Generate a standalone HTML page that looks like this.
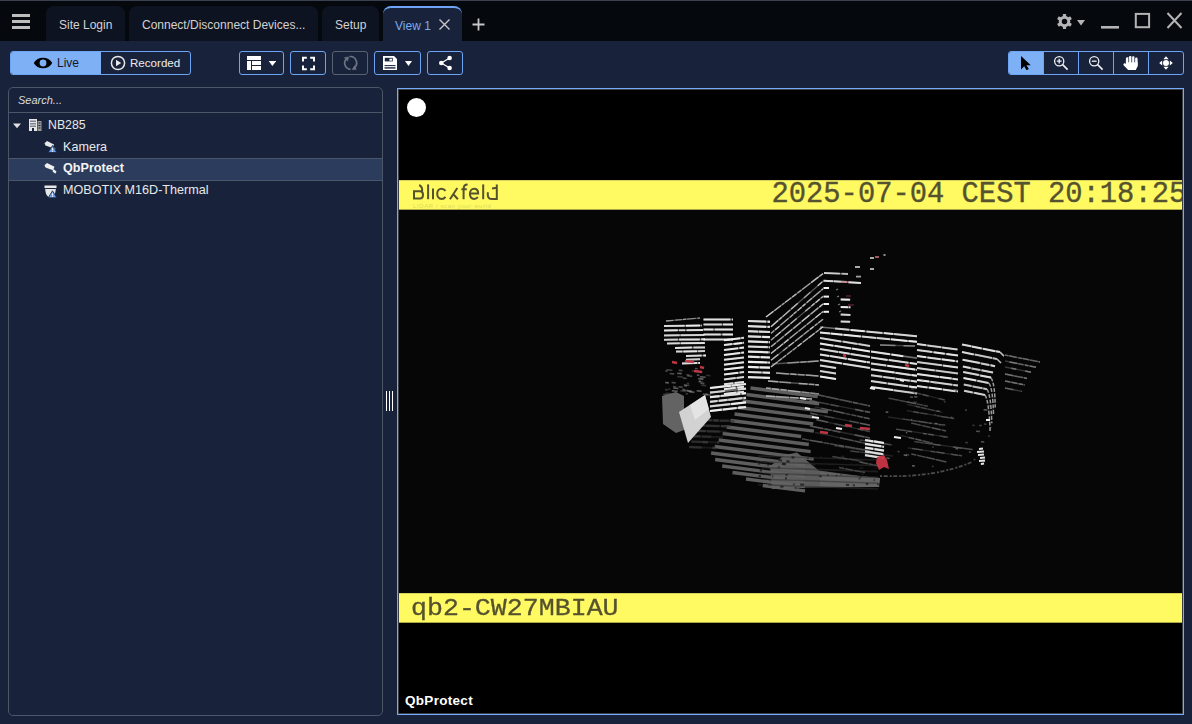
<!DOCTYPE html>
<html><head><meta charset="utf-8">
<style>
*{box-sizing:border-box;margin:0;padding:0}
html,body{width:1192px;height:724px;overflow:hidden;background:#18233b;font-family:"Liberation Sans",sans-serif;}
.abs{position:absolute}
#titlebar{left:0;top:0;width:1192px;height:41px;background:#05080d;border-top:1px solid #3b4150}
.tab{position:absolute;top:6px;height:35px;background:#0e1321;border-radius:8px 8px 0 0;color:#d2d2d2;font-size:12px;line-height:35px;white-space:nowrap}
.tab span{position:absolute;top:2px}
.btn{position:absolute;top:51px;height:24px;border:1px solid #6ea4f4;border-radius:3px;background:#18233b}
.lbl{position:absolute;white-space:nowrap;color:#e6e6e6;font-size:12.5px}
</style></head><body>
<div id="titlebar" class="abs"></div>
<!-- hamburger -->
<div class="abs" style="left:12px;top:14px;width:18px;height:3px;background:#bdbdbd"></div>
<div class="abs" style="left:12px;top:20px;width:18px;height:3px;background:#bdbdbd"></div>
<div class="abs" style="left:12px;top:26px;width:18px;height:3px;background:#bdbdbd"></div>
<!-- tabs -->
<div class="tab" style="left:46px;width:79px"><span style="left:13px">Site Login</span></div>
<div class="tab" style="left:129px;width:189px"><span style="left:13px">Connect/Disconnect Devices...</span></div>
<div class="tab" style="left:322px;width:57px"><span style="left:13px">Setup</span></div>
<div class="tab" style="left:383px;width:79px;background:#18233b;border-top:2px solid #6ea3f5;color:#7aaaf2;line-height:33px"><span style="left:12px">View 1</span></div>
<!-- close x on view tab -->
<svg class="abs" style="left:438px;top:18px" width="13" height="13" viewBox="0 0 13 13"><path d="M1.5 1.5L11.5 11.5M11.5 1.5L1.5 11.5" stroke="#c8c8c8" stroke-width="1.4"/></svg>
<!-- plus -->
<svg class="abs" style="left:472px;top:17.5px" width="13" height="13" viewBox="0 0 13 13"><path d="M6.5 0.5V12.5M0.5 6.5H12.5" stroke="#c8c8c8" stroke-width="1.8"/></svg>
<!-- title right icons -->
<svg class="abs" style="left:1050px;top:8px" width="142" height="30" viewBox="0 0 142 30">
  <g transform="translate(14.5 13.5)" fill="#b4b4b4"><rect x="-1.6" y="-7.6" width="3.2" height="4" rx="0.6" transform="rotate(0)"/><rect x="-1.6" y="-7.6" width="3.2" height="4" rx="0.6" transform="rotate(60)"/><rect x="-1.6" y="-7.6" width="3.2" height="4" rx="0.6" transform="rotate(120)"/><rect x="-1.6" y="-7.6" width="3.2" height="4" rx="0.6" transform="rotate(180)"/><rect x="-1.6" y="-7.6" width="3.2" height="4" rx="0.6" transform="rotate(240)"/><rect x="-1.6" y="-7.6" width="3.2" height="4" rx="0.6" transform="rotate(300)"/><circle r="5.8"/><circle r="2.7" fill="#05080d"/></g>
  <path d="M27 12H35L31 17.5Z" fill="#b4b4b4"/>
  <rect x="51" y="18" width="18" height="2.6" fill="#b4b4b4"/>
  <rect x="85.8" y="5.9" width="13.3" height="13.3" fill="none" stroke="#b4b4b4" stroke-width="2"/>
  <path d="M117.5 5L131.5 20M131.5 5L117.5 20" stroke="#b4b4b4" stroke-width="2"/>
</svg>

<!-- Live / Recorded -->
<div class="btn" style="left:10px;width:181px"></div>
<div class="abs" style="left:11px;top:52px;width:90px;height:22px;background:#7eb0f5;border-radius:2px 0 0 2px"></div>

<!-- toolbar buttons -->
<div class="btn" style="left:239px;width:45px"></div>
<div class="btn" style="left:290px;width:36px"></div>
<div class="btn" style="left:332px;width:36px;border-color:#5a6170"></div>
<div class="btn" style="left:374px;width:47px"></div>
<div class="btn" style="left:427px;width:36px"></div>

<!-- right group -->
<div class="btn" style="left:1008px;width:176px"></div>
<div class="abs" style="left:1009px;top:52px;width:35px;height:22px;background:#7eb0f5;border-radius:2px 0 0 2px"></div>
<div class="abs" style="left:1078px;top:52px;width:1px;height:22px;background:#6ea4f4"></div>
<div class="abs" style="left:1113px;top:52px;width:1px;height:22px;background:#6ea4f4"></div>
<div class="abs" style="left:1148px;top:52px;width:1px;height:22px;background:#6ea4f4"></div>
<div class="abs" style="left:1043px;top:52px;width:1px;height:22px;background:#6ea4f4"></div>

<!-- left panel -->
<div class="abs" style="left:8px;top:87px;width:375px;height:629px;border:1px solid #4b5668;border-radius:5px"></div>
<div class="abs" style="left:9px;top:112px;width:373px;height:1px;background:#4b5668"></div>
<div class="abs" style="left:9px;top:158px;width:373px;height:23px;background:#2b3c5c;border-top:1px solid #4b5668;border-bottom:1px solid #4b5668"></div>


<!-- Live/Recorded content -->
<svg class="abs" style="left:33px;top:57px" width="20" height="12" viewBox="0 0 20 12" overflow="visible"><path d="M0.8 6C4.2 -1 15.8 -1 19.2 6C15.8 13 4.2 13 0.8 6Z" fill="#000"/><circle cx="10" cy="6" r="3.4" fill="#7eb0f5"/></svg>
<div class="lbl" style="left:57px;top:56px;font-size:12px;color:#151525">Live</div>
<svg class="abs" style="left:110px;top:55px" width="16" height="16" viewBox="0 0 16 16"><circle cx="8" cy="8" r="6.6" fill="none" stroke="#e8e8e8" stroke-width="1.5"/><path d="M6 4.8L11.2 8L6 11.2Z" fill="#e8e8e8"/></svg>
<div class="lbl" style="left:130px;top:56px;font-size:11.6px;color:#ececec">Recorded</div>

<!-- layout icon -->
<svg class="abs" style="left:246px;top:55px" width="30" height="16" viewBox="0 0 30 16">
 <rect x="1" y="1" width="14" height="4" fill="#fff"/>
 <rect x="1" y="6" width="4" height="9" fill="#fff"/>
 <rect x="6" y="6" width="9" height="4" fill="#fff"/>
 <rect x="6" y="11" width="9" height="4" fill="#fff"/>
 <path d="M22.7 6H30.1L26.4 11Z" fill="#fff"/>
</svg>
<!-- fullscreen icon -->
<svg class="abs" style="left:300px;top:55px" width="16" height="16" viewBox="0 0 16 16" fill="none" stroke="#fff" stroke-width="2"><path d="M3 6.5V2.8H6.8M10.2 2.8H14V6.5M14 10.5V14.2H10.2M6.8 14.2H3V10.5"/></svg>
<!-- refresh icon -->
<svg class="abs" style="left:342px;top:55px" width="16" height="16" viewBox="0 0 16 16" fill="none" stroke="#6c7280" stroke-width="1.7">
 <path d="M4.6 3.6A6.3 6.3 0 0 0 8.6 14.4"/><path d="M7.4 1.6A6.3 6.3 0 0 1 11.6 13.2"/>
 <path d="M2.4 2.6L6.6 2L5.6 6.2Z" fill="#6c7280" stroke-width="0.6"/><path d="M10.2 14.6L14.2 14.4L12.8 10.6Z" fill="#6c7280" stroke-width="0.6"/>
</svg>
<!-- save icon -->
<svg class="abs" style="left:382px;top:55px" width="32" height="16" viewBox="0 0 32 16">
 <path d="M1 1H12L15 4V15H1Z" fill="#fff"/>
 <rect x="2.8" y="2.8" width="8" height="3.6" fill="#18233b"/>
 <rect x="7.4" y="3.7" width="2.7" height="2" fill="#fff"/>
 <rect x="2.5" y="10.1" width="11" height="1" fill="#18233b"/>
 <rect x="2.5" y="12.1" width="11" height="1.6" fill="#3a4256"/>
 <path d="M23 6H30L26.5 11Z" fill="#fff"/>
</svg>
<!-- share icon -->
<svg class="abs" style="left:437px;top:55px" width="16" height="16" viewBox="0 0 16 16">
 <path d="M4.3 8L12.6 3M4.3 8L12.6 13" stroke="#fff" stroke-width="1.3"/>
 <circle cx="4.3" cy="8" r="2.3" fill="#fff"/><circle cx="12.6" cy="3" r="2.3" fill="#fff"/><circle cx="12.6" cy="13" r="2.3" fill="#fff"/>
</svg>

<!-- right group icons -->
<svg class="abs" style="left:1018px;top:55px" width="16" height="16" viewBox="0 0 16 16"><path d="M3 1V14.5L6.2 11.3L8.6 15.3L10.8 14L8.5 10.2H12.8Z" fill="#000"/></svg>
<svg class="abs" style="left:1052px;top:54px" width="18" height="18" viewBox="0 0 18 18" fill="none" stroke="#f0f0f0" stroke-width="1.3">
 <circle cx="7.2" cy="7.2" r="4.6"/><path d="M10.4 10.4L15.6 15.6" stroke-width="1.6"/><path d="M7.2 4.8V9.6M4.8 7.2H9.6"/>
</svg>
<svg class="abs" style="left:1087px;top:54px" width="18" height="18" viewBox="0 0 18 18" fill="none" stroke="#f0f0f0" stroke-width="1.3">
 <circle cx="7.2" cy="7.2" r="4.6"/><path d="M10.4 10.4L15.6 15.6" stroke-width="1.6"/><path d="M4.8 7.2H9.6"/>
</svg>
<svg class="abs" style="left:1122px;top:55px" width="18" height="16" viewBox="0 0 18 16" fill="#fff">
 <rect x="3.9" y="2.3" width="2.7" height="9" rx="1.35"/><rect x="6.9" y="1" width="2.7" height="9" rx="1.35"/><rect x="9.9" y="1.3" width="2.7" height="9" rx="1.35"/><rect x="12.9" y="2.6" width="2.7" height="9" rx="1.35"/>
 <path d="M3.9 7H15.6V11.2L13.8 15H6.2L1.8 10.5C1.2 9.8 1.3 8.5 2.2 8.2C2.9 8 3.5 8.4 3.9 9Z"/>
 <path d="M6.75 3V7.5M9.75 2V7.5M12.75 2.5V7.5" stroke="#18233b" stroke-width="0.5"/>
</svg>
<svg class="abs" style="left:1158px;top:55px" width="16" height="16" viewBox="0 0 16 16" fill="#fff"><circle cx="8" cy="8" r="3"/><path d="M8 1.2L10.6 4.2H5.4Z M8 14.8L10.6 11.8H5.4Z M1.2 8L4.2 5.4V10.6Z M14.8 8L11.8 5.4V10.6Z"/></svg>

<!-- tree -->
<div class="lbl" style="left:18px;top:94px;font-size:11px;font-style:italic;color:#dcdcdc">Search...</div>
<svg class="abs" style="left:12px;top:122px" width="10" height="8" viewBox="0 0 10 8"><path d="M1 1.5H9L5 6.3Z" fill="#e0e0e0"/></svg>
<svg class="abs" style="left:28px;top:118px" width="15" height="14" viewBox="0 0 15 14" fill="#e6e6e6">
 <path d="M1 1H9V13H6V10H4V13H1Z"/><rect x="9.5" y="3" width="4" height="10" fill="#9a9a9a"/>
 <g fill="#18233b"><rect x="2.5" y="2.5" width="1" height="1.5"/><rect x="4.5" y="2.5" width="1" height="1.5"/><rect x="6.5" y="2.5" width="1" height="1.5"/>
 <rect x="2.5" y="5" width="1" height="1.5"/><rect x="4.5" y="5" width="1" height="1.5"/><rect x="6.5" y="5" width="1" height="1.5"/>
 <rect x="2.5" y="7.5" width="1" height="1.5"/><rect x="4.5" y="7.5" width="1" height="1.5"/><rect x="6.5" y="7.5" width="1" height="1.5"/>
 <rect x="10.5" y="4.5" width="2" height="1"/><rect x="10.5" y="7" width="2" height="1"/><rect x="10.5" y="9.5" width="2" height="1"/></g>
</svg>
<div class="lbl" style="left:48px;top:118px;font-size:12.3px;color:#e8e8e8">NB285</div>
<svg class="abs" style="left:43px;top:140px" width="15" height="13" viewBox="0 0 15 13">
 <path d="M1.5 3.2L4 1L11 4.5L9.5 8L2.5 5.5Z" fill="#e8e8e8"/><path d="M9.8 6.2L12.5 8.8L11.5 10.5" fill="#e8e8e8"/>
 <path d="M9.5 5.5L13.8 12.5H5.2Z" fill="#6aa2f2" stroke="#18233b" stroke-width="0.8"/><rect x="9.1" y="8" width="0.9" height="2.3" fill="#fff"/><rect x="9.1" y="10.9" width="0.9" height="0.9" fill="#fff"/>
</svg>
<div class="lbl" style="left:63px;top:140px;font-size:12.6px;color:#e8e8e8">Kamera</div>
<svg class="abs" style="left:43px;top:162px" width="15" height="13" viewBox="0 0 15 13">
 <path d="M1.5 3.2L4 1L11.5 4.8L10 8.3L2.5 5.5Z" fill="#f0f0f0"/><path d="M10.5 7L13.5 9.5L12.3 11.8L9.5 9.5Z" fill="#f0f0f0"/>
</svg>
<div class="lbl" style="left:63px;top:161px;font-size:12.6px;font-weight:bold;color:#f4f4f4">QbProtect</div>
<svg class="abs" style="left:43px;top:184px" width="15" height="15" viewBox="0 0 15 15">
 <path d="M1.5 1.5H13.5V4H12.8C12.8 10 10.5 13.5 7.5 13.5C4.5 13.5 2.2 10 2.2 4H1.5Z" fill="#e6e6e6"/><rect x="2.2" y="4" width="10.6" height="1" fill="#18233b"/>
 <path d="M9.5 6.8L13.8 13.8H5.2Z" fill="#6aa2f2" stroke="#18233b" stroke-width="0.8"/><rect x="9.1" y="9.3" width="0.9" height="2.3" fill="#fff"/><rect x="9.1" y="12.1" width="0.9" height="0.9" fill="#fff"/>
</svg>
<div class="lbl" style="left:63px;top:183px;font-size:12.6px;color:#e8e8e8">MOBOTIX M16D-Thermal</div>

<!-- splitter grip -->
<div class="abs" style="left:386px;top:391px;width:1px;height:20px;background:#fff"></div>
<div class="abs" style="left:389px;top:391px;width:1px;height:20px;background:#fff"></div>
<div class="abs" style="left:392px;top:391px;width:1px;height:20px;background:#fff"></div>

<!-- video -->
<div class="abs" style="left:397px;top:88px;width:787px;height:627px;border:1px solid #76aafc;background:#3a3f46"></div>


<!-- video content -->
<div class="abs" style="left:399px;top:90px;width:783px;height:623px;overflow:hidden;background:#000">
 <div class="abs" style="left:0;top:120px;width:783px;height:383px;background:#060606"></div>
 <!--CLOUD--><svg class="abs" style="left:0;top:0" width="783" height="623" viewBox="0 0 783 623" fill="none"><defs><filter id="bl" x="-5%" y="-5%" width="110%" height="110%"><feGaussianBlur stdDeviation="0.65"/></filter></defs><g filter="url(#bl)"><path d="M371.0,376.0 L386.0,365.0 L398.0,362.6 L419.8,380.5 L461.0,386.0 L481.0,388.0 L480.0,397.0 L405.0,397.5 L373.0,399.0Z" fill="#5c5c5c" fill-opacity="1.0"/><path d="M421.0,382.0 L461.0,386.0 L481.0,388.0 L480.0,397.0 L421.0,397.0Z" fill="#686868" fill-opacity="0.8"/><path d="M351.5,298.0L418.7,306.6" stroke="#636363" stroke-width="3.3" stroke-opacity="0.95"/><path d="M347.5,304.5L420.2,313.8" stroke="#636363" stroke-width="3.3" stroke-opacity="0.95"/><path d="M343.6,311.0L428.9,321.9" stroke="#636363" stroke-width="3.3" stroke-opacity="0.95"/><path d="M339.6,317.5L414.5,327.1" stroke="#636363" stroke-width="3.3" stroke-opacity="0.95"/><path d="M335.6,324.0L414.2,334.0" stroke="#636363" stroke-width="3.3" stroke-opacity="0.95"/><path d="M331.6,330.5L414.9,341.1" stroke="#636363" stroke-width="3.3" stroke-opacity="0.95"/><path d="M327.7,337.0L402.2,346.5" stroke="#636363" stroke-width="3.3" stroke-opacity="0.95"/><path d="M323.7,343.5L409.8,354.5" stroke="#636363" stroke-width="3.3" stroke-opacity="0.95"/><path d="M319.7,350.0L411.6,361.7" stroke="#636363" stroke-width="3.3" stroke-opacity="0.95"/><path d="M315.7,356.5L414.7,369.1" stroke="#636363" stroke-width="3.3" stroke-opacity="0.95"/><path d="M312.1,363.0L406.0,375.0" stroke="#636363" stroke-width="3.3" stroke-opacity="0.95"/><path d="M316.1,369.5L406.0,381.0" stroke="#636363" stroke-width="3.3" stroke-opacity="0.95"/><path d="M323.2,376.0L406.0,386.6" stroke="#636363" stroke-width="3.3" stroke-opacity="0.95"/><path d="M333.5,382.5L406.0,391.7" stroke="#636363" stroke-width="3.3" stroke-opacity="0.95"/><path d="M347.0,389.0L406.0,396.5" stroke="#636363" stroke-width="3.3" stroke-opacity="0.95"/><path d="M363.7,395.5L406.0,400.9" stroke="#636363" stroke-width="3.3" stroke-opacity="0.95"/><path d="M359.0,366.0L479.0,370.0" stroke="#303030" stroke-width="1.6" stroke-opacity="0.55"/><path d="M361.0,371.8L479.0,375.8" stroke="#303030" stroke-width="1.6" stroke-opacity="0.55"/><path d="M363.0,377.6L479.0,381.6" stroke="#303030" stroke-width="1.6" stroke-opacity="0.55"/><path d="M365.0,383.4L479.0,387.4" stroke="#303030" stroke-width="1.6" stroke-opacity="0.55"/><path d="M367.0,389.2L479.0,393.2" stroke="#303030" stroke-width="1.6" stroke-opacity="0.55"/><path d="M369.0,395.0L479.0,399.0" stroke="#303030" stroke-width="1.6" stroke-opacity="0.55"/><path d="M368.5,375.0L369.8,375.1" stroke="#1c1c1c" stroke-width="2.0" stroke-opacity="0.82"/><path d="M441.6,366.4L445.5,366.8" stroke="#1c1c1c" stroke-width="2.0" stroke-opacity="0.89"/><path d="M436.8,385.3L438.3,385.5" stroke="#1c1c1c" stroke-width="2.0" stroke-opacity="0.51"/><path d="M421.5,367.0L423.0,367.1" stroke="#1c1c1c" stroke-width="2.0" stroke-opacity="0.60"/><path d="M360.7,380.3L363.0,380.5" stroke="#1c1c1c" stroke-width="2.0" stroke-opacity="0.84"/><path d="M420.3,386.1L422.8,386.4" stroke="#1c1c1c" stroke-width="2.0" stroke-opacity="0.76"/><path d="M412.8,374.2L416.8,374.6" stroke="#1c1c1c" stroke-width="2.0" stroke-opacity="0.90"/><path d="M459.5,388.4L461.5,388.6" stroke="#1c1c1c" stroke-width="2.0" stroke-opacity="0.59"/><path d="M392.3,367.3L395.6,367.6" stroke="#1c1c1c" stroke-width="2.0" stroke-opacity="0.66"/><path d="M460.3,377.8L464.2,378.1" stroke="#1c1c1c" stroke-width="2.0" stroke-opacity="0.84"/><path d="M357.1,371.9L360.8,372.3" stroke="#1c1c1c" stroke-width="2.0" stroke-opacity="0.69"/><path d="M476.6,378.1L477.8,378.2" stroke="#1c1c1c" stroke-width="2.0" stroke-opacity="0.75"/><path d="M452.0,373.9L453.2,374.0" stroke="#1c1c1c" stroke-width="2.0" stroke-opacity="0.63"/><path d="M474.6,390.0L476.0,390.2" stroke="#1c1c1c" stroke-width="2.0" stroke-opacity="0.60"/><path d="M369.3,367.0L372.7,367.3" stroke="#1c1c1c" stroke-width="2.0" stroke-opacity="0.57"/><path d="M425.2,379.8L426.8,379.9" stroke="#1c1c1c" stroke-width="2.0" stroke-opacity="0.79"/><path d="M373.0,386.2L374.3,386.4" stroke="#1c1c1c" stroke-width="2.0" stroke-opacity="0.67"/><path d="M383.0,373.9L386.9,374.3" stroke="#1c1c1c" stroke-width="2.0" stroke-opacity="0.82"/><path d="M394.1,394.2L395.7,394.4" stroke="#1c1c1c" stroke-width="2.0" stroke-opacity="0.66"/><path d="M461.2,386.2L462.5,386.3" stroke="#1c1c1c" stroke-width="2.0" stroke-opacity="0.90"/><path d="M383.0,373.5L386.3,373.9" stroke="#1c1c1c" stroke-width="2.0" stroke-opacity="0.63"/><path d="M393.2,367.4L394.4,367.5" stroke="#1c1c1c" stroke-width="2.0" stroke-opacity="0.73"/><path d="M386.6,384.8L388.8,385.1" stroke="#1c1c1c" stroke-width="2.0" stroke-opacity="0.68"/><path d="M474.0,381.0L476.7,381.2" stroke="#1c1c1c" stroke-width="2.0" stroke-opacity="0.85"/><path d="M379.3,370.1L383.0,370.5" stroke="#1c1c1c" stroke-width="2.0" stroke-opacity="0.83"/><path d="M387.4,371.3L390.7,371.6" stroke="#1c1c1c" stroke-width="2.0" stroke-opacity="0.88"/><path d="M381.0,396.4L384.6,396.7" stroke="#1c1c1c" stroke-width="2.0" stroke-opacity="0.74"/><path d="M408.4,368.4L409.5,368.5" stroke="#1c1c1c" stroke-width="2.0" stroke-opacity="0.89"/><path d="M386.1,388.3L387.9,388.4" stroke="#1c1c1c" stroke-width="2.0" stroke-opacity="0.83"/><path d="M429.8,374.7L431.3,374.8" stroke="#1c1c1c" stroke-width="2.0" stroke-opacity="0.79"/><path d="M365.4,372.5L368.1,372.8" stroke="#1c1c1c" stroke-width="2.0" stroke-opacity="0.84"/><path d="M431.9,374.2L435.7,374.6" stroke="#1c1c1c" stroke-width="2.0" stroke-opacity="0.58"/><path d="M359.0,373.9L361.4,374.1" stroke="#1c1c1c" stroke-width="2.0" stroke-opacity="0.52"/><path d="M378.5,377.2L381.2,377.4" stroke="#1c1c1c" stroke-width="2.0" stroke-opacity="0.55"/><path d="M401.2,394.4L405.1,394.8" stroke="#1c1c1c" stroke-width="2.0" stroke-opacity="0.76"/><path d="M441.3,384.3L442.8,384.4" stroke="#1c1c1c" stroke-width="2.0" stroke-opacity="0.51"/><path d="M359.2,395.0L362.3,395.3" stroke="#1c1c1c" stroke-width="2.0" stroke-opacity="0.89"/><path d="M359.6,386.0L362.0,386.2" stroke="#1c1c1c" stroke-width="2.0" stroke-opacity="0.79"/><path d="M395.9,398.0L397.1,398.1" stroke="#1c1c1c" stroke-width="2.0" stroke-opacity="0.72"/><path d="M446.9,394.7L450.1,395.0" stroke="#1c1c1c" stroke-width="2.0" stroke-opacity="0.78"/><path d="M453.8,395.2L455.8,395.4" stroke="#1c1c1c" stroke-width="2.0" stroke-opacity="0.77"/><path d="M466.9,393.7L469.2,394.0" stroke="#1c1c1c" stroke-width="2.0" stroke-opacity="0.82"/><path d="M462.3,383.9L465.2,384.2" stroke="#1c1c1c" stroke-width="2.0" stroke-opacity="0.65"/><path d="M428.1,385.1L429.3,385.2" stroke="#1c1c1c" stroke-width="2.0" stroke-opacity="0.76"/><path d="M478.2,394.0L481.4,394.4" stroke="#1c1c1c" stroke-width="2.0" stroke-opacity="0.66"/><path d="M263.0,306.0 L277.0,302.0 L285.0,306.0 L285.0,340.0 L277.0,343.0 L264.0,334.0Z" fill="#646464" fill-opacity="1.0"/><path d="M301.0,330.0L335.4,331.0" stroke="#3e3e3e" stroke-width="2.04" stroke-opacity="0.36"/><path d="M301.0,330.0L312.8,330.3" stroke="#3e3e3e" stroke-width="2.4" stroke-opacity="0.66"/><path d="M314.2,330.4L319.5,330.5" stroke="#3e3e3e" stroke-width="2.4" stroke-opacity="0.79"/><path d="M320.7,330.6L330.0,330.8" stroke="#3e3e3e" stroke-width="2.4" stroke-opacity="0.58"/><path d="M331.1,330.9L335.4,331.0" stroke="#3e3e3e" stroke-width="2.4" stroke-opacity="0.72"/><path d="M298.8,335.4L331.6,336.4" stroke="#3e3e3e" stroke-width="2.04" stroke-opacity="0.36"/><path d="M298.8,335.4L306.3,335.6" stroke="#3e3e3e" stroke-width="2.4" stroke-opacity="0.74"/><path d="M307.1,335.7L320.5,336.1" stroke="#3e3e3e" stroke-width="2.4" stroke-opacity="0.66"/><path d="M322.0,336.1L329.8,336.3" stroke="#3e3e3e" stroke-width="2.4" stroke-opacity="0.74"/><path d="M330.8,336.4L331.6,336.4" stroke="#3e3e3e" stroke-width="2.4" stroke-opacity="0.52"/><path d="M296.7,340.8L327.8,341.8" stroke="#3e3e3e" stroke-width="2.04" stroke-opacity="0.36"/><path d="M296.7,340.8L306.9,341.1" stroke="#3e3e3e" stroke-width="2.4" stroke-opacity="0.76"/><path d="M308.0,341.2L320.8,341.6" stroke="#3e3e3e" stroke-width="2.4" stroke-opacity="0.57"/><path d="M294.5,346.2L324.1,347.2" stroke="#3e3e3e" stroke-width="2.04" stroke-opacity="0.36"/><path d="M294.5,346.2L301.7,346.4" stroke="#3e3e3e" stroke-width="2.4" stroke-opacity="0.67"/><path d="M303.0,346.5L312.3,346.8" stroke="#3e3e3e" stroke-width="2.4" stroke-opacity="0.53"/><path d="M292.4,351.6L320.3,352.6" stroke="#3e3e3e" stroke-width="2.04" stroke-opacity="0.36"/><path d="M292.4,351.6L302.5,352.0" stroke="#3e3e3e" stroke-width="2.4" stroke-opacity="0.55"/><path d="M303.1,352.0L309.0,352.2" stroke="#3e3e3e" stroke-width="2.4" stroke-opacity="0.79"/><path d="M317.9,352.5L320.3,352.6" stroke="#3e3e3e" stroke-width="2.4" stroke-opacity="0.60"/><path d="M290.2,357.0L316.5,358.0" stroke="#3e3e3e" stroke-width="2.04" stroke-opacity="0.36"/><path d="M290.2,357.0L302.7,357.5" stroke="#3e3e3e" stroke-width="2.4" stroke-opacity="0.58"/><path d="M313.3,357.9L316.5,358.0" stroke="#3e3e3e" stroke-width="2.4" stroke-opacity="0.74"/><path d="M280.0,322.0 L306.0,305.0 L312.0,327.0 L289.0,353.0Z" fill="#d2d2d2" fill-opacity="1.0"/><path d="M291.0,315.0 L306.0,305.0 L310.0,319.0 L296.0,330.0Z" fill="#e8e8e8" fill-opacity="0.8"/><path d="M279.6,296.8L283.7,297.2" stroke="#8a8a8a" stroke-width="1.6" stroke-opacity="0.53"/><path d="M299.3,288.6L304.5,289.1" stroke="#8a8a8a" stroke-width="1.6" stroke-opacity="0.66"/><path d="M267.2,303.2L272.1,303.7" stroke="#8a8a8a" stroke-width="1.6" stroke-opacity="0.31"/><path d="M284.8,294.9L290.4,295.5" stroke="#8a8a8a" stroke-width="1.6" stroke-opacity="0.42"/><path d="M290.3,301.7L295.5,302.3" stroke="#8a8a8a" stroke-width="1.6" stroke-opacity="0.67"/><path d="M285.3,295.6L288.1,295.9" stroke="#8a8a8a" stroke-width="1.6" stroke-opacity="0.57"/><path d="M302.3,295.3L307.2,295.8" stroke="#8a8a8a" stroke-width="1.6" stroke-opacity="0.35"/><path d="M306.2,304.5L312.1,305.1" stroke="#8a8a8a" stroke-width="1.6" stroke-opacity="0.49"/><path d="M301.0,286.7L306.6,287.2" stroke="#8a8a8a" stroke-width="1.6" stroke-opacity="0.64"/><path d="M279.7,280.2L283.5,280.6" stroke="#8a8a8a" stroke-width="1.6" stroke-opacity="0.50"/><path d="M299.9,291.2L302.0,291.4" stroke="#8a8a8a" stroke-width="1.6" stroke-opacity="0.61"/><path d="M266.1,299.6L268.8,299.9" stroke="#8a8a8a" stroke-width="1.6" stroke-opacity="0.40"/><path d="M300.8,281.8L303.4,282.1" stroke="#8a8a8a" stroke-width="1.6" stroke-opacity="0.48"/><path d="M297.7,300.7L302.5,301.2" stroke="#8a8a8a" stroke-width="1.6" stroke-opacity="0.68"/><path d="M286.6,303.6L289.0,303.9" stroke="#8a8a8a" stroke-width="1.6" stroke-opacity="0.35"/><path d="M288.3,285.8L293.2,286.3" stroke="#8a8a8a" stroke-width="1.6" stroke-opacity="0.54"/><path d="M288.1,300.8L292.3,301.2" stroke="#8a8a8a" stroke-width="1.6" stroke-opacity="0.39"/><path d="M281.3,300.8L286.9,301.4" stroke="#8a8a8a" stroke-width="1.6" stroke-opacity="0.34"/><path d="M303.8,304.1L307.9,304.6" stroke="#8a8a8a" stroke-width="1.6" stroke-opacity="0.51"/><path d="M272.6,292.5L276.7,292.9" stroke="#8a8a8a" stroke-width="1.6" stroke-opacity="0.52"/><path d="M264.3,304.2L268.4,304.6" stroke="#8a8a8a" stroke-width="1.6" stroke-opacity="0.43"/><path d="M301.5,293.2L305.4,293.6" stroke="#8a8a8a" stroke-width="1.6" stroke-opacity="0.56"/><path d="M266.2,292.5L269.8,292.9" stroke="#8a8a8a" stroke-width="1.6" stroke-opacity="0.68"/><path d="M307.3,285.3L311.2,285.7" stroke="#8a8a8a" stroke-width="1.6" stroke-opacity="0.31"/><path d="M283.8,300.0L289.4,300.6" stroke="#8a8a8a" stroke-width="1.6" stroke-opacity="0.46"/><path d="M278.2,283.2L282.7,283.6" stroke="#8a8a8a" stroke-width="1.6" stroke-opacity="0.67"/><path d="M269.2,299.0L271.3,299.2" stroke="#8a8a8a" stroke-width="1.6" stroke-opacity="0.34"/><path d="M273.9,296.5L277.2,296.9" stroke="#8a8a8a" stroke-width="1.6" stroke-opacity="0.41"/><path d="M292.7,280.8L297.7,281.3" stroke="#8a8a8a" stroke-width="1.6" stroke-opacity="0.31"/><path d="M287.5,284.8L290.3,285.0" stroke="#8a8a8a" stroke-width="1.6" stroke-opacity="0.49"/><path d="M284.0,288.1L287.6,288.5" stroke="#8a8a8a" stroke-width="1.6" stroke-opacity="0.49"/><path d="M270.7,283.5L275.2,284.0" stroke="#8a8a8a" stroke-width="1.6" stroke-opacity="0.54"/><path d="M288.4,301.0L292.9,301.4" stroke="#8a8a8a" stroke-width="1.6" stroke-opacity="0.64"/><path d="M274.2,298.0L279.4,298.5" stroke="#8a8a8a" stroke-width="1.6" stroke-opacity="0.66"/><path d="M278.2,286.5L283.9,287.1" stroke="#8a8a8a" stroke-width="1.6" stroke-opacity="0.35"/><path d="M310.9,302.0L313.5,302.2" stroke="#8a8a8a" stroke-width="1.6" stroke-opacity="0.36"/><path d="M297.9,285.0L300.3,285.2" stroke="#8a8a8a" stroke-width="1.6" stroke-opacity="0.62"/><path d="M283.2,299.3L285.7,299.6" stroke="#8a8a8a" stroke-width="1.6" stroke-opacity="0.43"/><path d="M295.9,278.5L298.7,278.8" stroke="#8a8a8a" stroke-width="1.6" stroke-opacity="0.56"/><path d="M306.7,304.1L309.2,304.4" stroke="#8a8a8a" stroke-width="1.6" stroke-opacity="0.48"/><path d="M299.4,291.6L304.1,292.0" stroke="#8a8a8a" stroke-width="1.6" stroke-opacity="0.34"/><path d="M266.4,280.9L268.5,281.1" stroke="#8a8a8a" stroke-width="1.6" stroke-opacity="0.50"/><path d="M287.7,293.4L290.3,293.6" stroke="#8a8a8a" stroke-width="1.6" stroke-opacity="0.33"/><path d="M272.8,300.7L278.7,301.3" stroke="#8a8a8a" stroke-width="1.6" stroke-opacity="0.67"/><path d="M267.6,279.7L273.4,280.3" stroke="#8a8a8a" stroke-width="1.6" stroke-opacity="0.46"/><path d="M265.0,236.0L303.0,235.5" stroke="#ececec" stroke-width="1.7" stroke-opacity="0.45"/><path d="M265.0,236.0L285.7,235.7" stroke="#ececec" stroke-width="2.0" stroke-opacity="0.88"/><path d="M286.8,235.7L301.1,235.5" stroke="#ececec" stroke-width="2.0" stroke-opacity="1.00"/><path d="M302.4,235.5L303.0,235.5" stroke="#ececec" stroke-width="2.0" stroke-opacity="0.89"/><path d="M265.0,240.5L304.0,240.0" stroke="#ececec" stroke-width="1.7" stroke-opacity="0.45"/><path d="M265.0,240.5L278.8,240.3" stroke="#ececec" stroke-width="2.0" stroke-opacity="0.96"/><path d="M279.9,240.3L286.2,240.2" stroke="#ececec" stroke-width="2.0" stroke-opacity="0.80"/><path d="M287.5,240.2L304.0,240.0" stroke="#ececec" stroke-width="2.0" stroke-opacity="0.90"/><path d="M265.0,245.4L306.0,244.9" stroke="#ececec" stroke-width="1.7" stroke-opacity="0.45"/><path d="M265.0,245.4L280.7,245.2" stroke="#ececec" stroke-width="2.0" stroke-opacity="0.80"/><path d="M281.5,245.2L305.0,244.9" stroke="#ececec" stroke-width="2.0" stroke-opacity="0.81"/><path d="M265.0,249.8L306.0,249.3" stroke="#ececec" stroke-width="1.7" stroke-opacity="0.45"/><path d="M265.0,249.8L278.8,249.6" stroke="#ececec" stroke-width="2.0" stroke-opacity="0.78"/><path d="M280.1,249.6L300.8,249.4" stroke="#ececec" stroke-width="2.0" stroke-opacity="0.90"/><path d="M302.1,249.3L306.0,249.3" stroke="#ececec" stroke-width="2.0" stroke-opacity="0.88"/><path d="M268.0,253.5L306.0,253.0" stroke="#ececec" stroke-width="1.7" stroke-opacity="0.45"/><path d="M268.0,253.5L280.8,253.3" stroke="#ececec" stroke-width="2.0" stroke-opacity="0.84"/><path d="M281.7,253.3L305.8,253.0" stroke="#ececec" stroke-width="2.0" stroke-opacity="0.92"/><path d="M276.0,257.9L306.0,257.4" stroke="#ececec" stroke-width="1.7" stroke-opacity="0.45"/><path d="M276.0,257.9L292.9,257.6" stroke="#ececec" stroke-width="2.0" stroke-opacity="0.90"/><path d="M294.5,257.6L306.0,257.4" stroke="#ececec" stroke-width="2.0" stroke-opacity="0.81"/><path d="M277.0,261.6L306.0,261.1" stroke="#ececec" stroke-width="1.7" stroke-opacity="0.45"/><path d="M277.0,261.6L283.4,261.5" stroke="#ececec" stroke-width="2.0" stroke-opacity="0.82"/><path d="M284.3,261.5L298.0,261.2" stroke="#ececec" stroke-width="2.0" stroke-opacity="0.95"/><path d="M299.0,261.2L306.0,261.1" stroke="#ececec" stroke-width="2.0" stroke-opacity="0.77"/><path d="M287.0,266.0L307.0,265.5" stroke="#ececec" stroke-width="1.7" stroke-opacity="0.45"/><path d="M287.0,266.0L302.7,265.6" stroke="#ececec" stroke-width="2.0" stroke-opacity="0.86"/><path d="M304.3,265.6L307.0,265.5" stroke="#ececec" stroke-width="2.0" stroke-opacity="0.98"/><path d="M287.0,269.7L301.0,269.2" stroke="#ececec" stroke-width="1.7" stroke-opacity="0.45"/><path d="M287.0,269.7L301.0,269.2" stroke="#ececec" stroke-width="2.0" stroke-opacity="0.77"/><path d="M283.0,273.4L301.0,272.9" stroke="#ececec" stroke-width="1.7" stroke-opacity="0.45"/><path d="M283.0,273.4L298.1,273.0" stroke="#ececec" stroke-width="2.0" stroke-opacity="0.88"/><path d="M299.3,272.9L301.0,272.9" stroke="#ececec" stroke-width="2.0" stroke-opacity="0.89"/><path d="M267.0,231.0L301.0,228.0" stroke="#bdbdbd" stroke-width="1.105" stroke-opacity="0.36"/><path d="M267.0,231.0L274.6,230.3" stroke="#bdbdbd" stroke-width="1.3" stroke-opacity="0.74"/><path d="M275.9,230.2L283.2,229.6" stroke="#bdbdbd" stroke-width="1.3" stroke-opacity="0.66"/><path d="M284.1,229.5L287.2,229.2" stroke="#bdbdbd" stroke-width="1.3" stroke-opacity="0.79"/><path d="M288.0,229.1L296.8,228.4" stroke="#bdbdbd" stroke-width="1.3" stroke-opacity="0.62"/><path d="M298.2,228.3L301.0,228.0" stroke="#bdbdbd" stroke-width="1.3" stroke-opacity="0.61"/><path d="M304.5,229.5L334.0,229.5" stroke="#f0f0f0" stroke-width="1.7" stroke-opacity="0.45"/><path d="M304.5,229.5L331.4,229.5" stroke="#f0f0f0" stroke-width="2.0" stroke-opacity="0.88"/><path d="M333.0,229.5L334.0,229.5" stroke="#f0f0f0" stroke-width="2.0" stroke-opacity="0.77"/><path d="M304.5,234.5L334.0,234.5" stroke="#f0f0f0" stroke-width="1.7" stroke-opacity="0.45"/><path d="M304.5,234.5L322.8,234.5" stroke="#f0f0f0" stroke-width="2.0" stroke-opacity="0.80"/><path d="M324.0,234.5L334.0,234.5" stroke="#f0f0f0" stroke-width="2.0" stroke-opacity="0.89"/><path d="M304.5,239.5L334.0,239.5" stroke="#f0f0f0" stroke-width="1.7" stroke-opacity="0.45"/><path d="M304.5,239.5L314.5,239.5" stroke="#f0f0f0" stroke-width="2.0" stroke-opacity="0.97"/><path d="M315.6,239.5L334.0,239.5" stroke="#f0f0f0" stroke-width="2.0" stroke-opacity="0.93"/><path d="M304.5,244.5L334.0,244.5" stroke="#f0f0f0" stroke-width="1.7" stroke-opacity="0.45"/><path d="M304.5,244.5L321.8,244.5" stroke="#f0f0f0" stroke-width="2.0" stroke-opacity="0.87"/><path d="M323.4,244.5L334.0,244.5" stroke="#f0f0f0" stroke-width="2.0" stroke-opacity="0.94"/><path d="M304.5,249.5L334.0,249.5" stroke="#f0f0f0" stroke-width="1.7" stroke-opacity="0.45"/><path d="M304.5,249.5L331.2,249.5" stroke="#f0f0f0" stroke-width="2.0" stroke-opacity="0.84"/><path d="M332.1,249.5L334.0,249.5" stroke="#f0f0f0" stroke-width="2.0" stroke-opacity="0.86"/><path d="M325.0,250.2L345.0,247.8" stroke="#f2f2f2" stroke-width="1.7" stroke-opacity="0.45"/><path d="M325.0,250.2L341.3,248.2" stroke="#f2f2f2" stroke-width="2.0" stroke-opacity="0.95"/><path d="M342.2,248.1L345.0,247.8" stroke="#f2f2f2" stroke-width="2.0" stroke-opacity="0.78"/><path d="M325.0,255.1L345.0,252.7" stroke="#f2f2f2" stroke-width="1.7" stroke-opacity="0.45"/><path d="M325.0,255.1L333.3,254.1" stroke="#f2f2f2" stroke-width="2.0" stroke-opacity="0.89"/><path d="M334.5,254.0L343.4,252.9" stroke="#f2f2f2" stroke-width="2.0" stroke-opacity="0.98"/><path d="M344.1,252.8L345.0,252.7" stroke="#f2f2f2" stroke-width="2.0" stroke-opacity="0.84"/><path d="M325.0,260.0L345.0,257.6" stroke="#f2f2f2" stroke-width="1.7" stroke-opacity="0.45"/><path d="M325.0,260.0L339.1,258.3" stroke="#f2f2f2" stroke-width="2.0" stroke-opacity="0.91"/><path d="M340.5,258.1L345.0,257.6" stroke="#f2f2f2" stroke-width="2.0" stroke-opacity="0.97"/><path d="M325.0,264.9L345.0,262.5" stroke="#f2f2f2" stroke-width="1.7" stroke-opacity="0.45"/><path d="M325.0,264.9L341.2,263.0" stroke="#f2f2f2" stroke-width="2.0" stroke-opacity="0.95"/><path d="M342.2,262.8L345.0,262.5" stroke="#f2f2f2" stroke-width="2.0" stroke-opacity="0.91"/><path d="M325.0,269.8L345.0,267.4" stroke="#f2f2f2" stroke-width="1.7" stroke-opacity="0.45"/><path d="M325.0,269.8L345.0,267.4" stroke="#f2f2f2" stroke-width="2.0" stroke-opacity="0.86"/><path d="M325.0,274.7L345.0,272.3" stroke="#f2f2f2" stroke-width="1.7" stroke-opacity="0.45"/><path d="M325.0,274.7L345.0,272.3" stroke="#f2f2f2" stroke-width="2.0" stroke-opacity="0.91"/><path d="M325.0,279.6L345.0,277.2" stroke="#f2f2f2" stroke-width="1.7" stroke-opacity="0.45"/><path d="M325.0,279.6L344.7,277.2" stroke="#f2f2f2" stroke-width="2.0" stroke-opacity="0.98"/><path d="M325.0,284.5L345.0,282.1" stroke="#f2f2f2" stroke-width="1.7" stroke-opacity="0.45"/><path d="M325.0,284.5L339.2,282.8" stroke="#f2f2f2" stroke-width="2.0" stroke-opacity="0.93"/><path d="M340.6,282.6L345.0,282.1" stroke="#f2f2f2" stroke-width="2.0" stroke-opacity="0.83"/><path d="M325.0,289.4L345.0,287.0" stroke="#f2f2f2" stroke-width="1.7" stroke-opacity="0.45"/><path d="M325.0,289.4L336.7,288.0" stroke="#f2f2f2" stroke-width="2.0" stroke-opacity="0.83"/><path d="M337.6,287.9L345.0,287.0" stroke="#f2f2f2" stroke-width="2.0" stroke-opacity="0.82"/><path d="M325.0,294.3L345.0,291.9" stroke="#f2f2f2" stroke-width="1.7" stroke-opacity="0.45"/><path d="M325.0,294.3L334.1,293.2" stroke="#f2f2f2" stroke-width="2.0" stroke-opacity="0.86"/><path d="M335.6,293.0L345.0,291.9" stroke="#f2f2f2" stroke-width="2.0" stroke-opacity="0.89"/><path d="M325.0,299.2L345.0,296.8" stroke="#f2f2f2" stroke-width="1.7" stroke-opacity="0.45"/><path d="M325.0,299.2L336.7,297.8" stroke="#f2f2f2" stroke-width="2.0" stroke-opacity="0.90"/><path d="M338.2,297.6L345.0,296.8" stroke="#f2f2f2" stroke-width="2.0" stroke-opacity="0.91"/><path d="M325.0,304.1L345.0,301.7" stroke="#f2f2f2" stroke-width="1.7" stroke-opacity="0.45"/><path d="M325.0,304.1L337.5,302.6" stroke="#f2f2f2" stroke-width="2.0" stroke-opacity="0.90"/><path d="M338.3,302.5L345.0,301.7" stroke="#f2f2f2" stroke-width="2.0" stroke-opacity="0.86"/><path d="M349.0,231.0L371.0,231.8" stroke="#f6f6f6" stroke-width="1.87" stroke-opacity="0.45"/><path d="M349.0,231.0L367.1,231.7" stroke="#f6f6f6" stroke-width="2.2" stroke-opacity="0.81"/><path d="M368.6,231.7L371.0,231.8" stroke="#f6f6f6" stroke-width="2.2" stroke-opacity="0.87"/><path d="M349.0,236.1L371.0,236.9" stroke="#f6f6f6" stroke-width="1.87" stroke-opacity="0.45"/><path d="M349.0,236.1L367.2,236.8" stroke="#f6f6f6" stroke-width="2.2" stroke-opacity="0.84"/><path d="M368.6,236.8L371.0,236.9" stroke="#f6f6f6" stroke-width="2.2" stroke-opacity="0.80"/><path d="M349.0,241.2L371.0,242.0" stroke="#f6f6f6" stroke-width="1.87" stroke-opacity="0.45"/><path d="M349.0,241.2L359.3,241.6" stroke="#f6f6f6" stroke-width="2.2" stroke-opacity="0.78"/><path d="M360.0,241.6L371.0,242.0" stroke="#f6f6f6" stroke-width="2.2" stroke-opacity="0.81"/><path d="M349.0,246.3L371.0,247.1" stroke="#f6f6f6" stroke-width="1.87" stroke-opacity="0.45"/><path d="M349.0,246.3L362.0,246.8" stroke="#f6f6f6" stroke-width="2.2" stroke-opacity="0.81"/><path d="M363.1,246.8L371.0,247.1" stroke="#f6f6f6" stroke-width="2.2" stroke-opacity="0.92"/><path d="M349.0,251.4L371.0,252.2" stroke="#f6f6f6" stroke-width="1.87" stroke-opacity="0.45"/><path d="M349.0,251.4L368.9,252.1" stroke="#f6f6f6" stroke-width="2.2" stroke-opacity="0.87"/><path d="M370.2,252.2L371.0,252.2" stroke="#f6f6f6" stroke-width="2.2" stroke-opacity="0.90"/><path d="M349.0,256.5L371.0,257.3" stroke="#f6f6f6" stroke-width="1.87" stroke-opacity="0.45"/><path d="M349.0,256.5L368.8,257.2" stroke="#f6f6f6" stroke-width="2.2" stroke-opacity="0.80"/><path d="M370.2,257.3L371.0,257.3" stroke="#f6f6f6" stroke-width="2.2" stroke-opacity="0.84"/><path d="M349.0,261.6L371.0,262.4" stroke="#f6f6f6" stroke-width="1.87" stroke-opacity="0.45"/><path d="M349.0,261.6L369.5,262.3" stroke="#f6f6f6" stroke-width="2.2" stroke-opacity="0.89"/><path d="M370.5,262.4L371.0,262.4" stroke="#f6f6f6" stroke-width="2.2" stroke-opacity="0.75"/><path d="M349.0,266.7L371.0,267.5" stroke="#f6f6f6" stroke-width="1.87" stroke-opacity="0.45"/><path d="M349.0,266.7L360.7,267.1" stroke="#f6f6f6" stroke-width="2.2" stroke-opacity="0.89"/><path d="M361.6,267.2L371.0,267.5" stroke="#f6f6f6" stroke-width="2.2" stroke-opacity="0.92"/><path d="M349.0,271.8L371.0,272.6" stroke="#f6f6f6" stroke-width="1.87" stroke-opacity="0.45"/><path d="M349.0,271.8L368.5,272.5" stroke="#f6f6f6" stroke-width="2.2" stroke-opacity="0.96"/><path d="M369.1,272.5L371.0,272.6" stroke="#f6f6f6" stroke-width="2.2" stroke-opacity="0.77"/><path d="M349.0,276.9L371.0,277.7" stroke="#f6f6f6" stroke-width="1.87" stroke-opacity="0.45"/><path d="M349.0,276.9L359.8,277.3" stroke="#f6f6f6" stroke-width="2.2" stroke-opacity="0.95"/><path d="M360.6,277.3L371.0,277.7" stroke="#f6f6f6" stroke-width="2.2" stroke-opacity="0.94"/><path d="M349.0,282.0L371.0,282.8" stroke="#f6f6f6" stroke-width="1.87" stroke-opacity="0.45"/><path d="M349.0,282.0L362.5,282.5" stroke="#f6f6f6" stroke-width="2.2" stroke-opacity="0.81"/><path d="M363.5,282.5L371.0,282.8" stroke="#f6f6f6" stroke-width="2.2" stroke-opacity="0.88"/><path d="M349.0,287.1L371.0,287.9" stroke="#f6f6f6" stroke-width="1.87" stroke-opacity="0.45"/><path d="M349.0,287.1L371.0,287.9" stroke="#f6f6f6" stroke-width="2.2" stroke-opacity="0.91"/><path d="M311.0,298.0L347.0,294.0" stroke="#f4f4f4" stroke-width="1.87" stroke-opacity="0.45"/><path d="M311.0,298.0L331.9,295.7" stroke="#f4f4f4" stroke-width="2.2" stroke-opacity="0.94"/><path d="M332.5,295.6L347.0,294.0" stroke="#f4f4f4" stroke-width="2.2" stroke-opacity="0.90"/><path d="M311.0,302.6L347.0,298.6" stroke="#f4f4f4" stroke-width="1.87" stroke-opacity="0.45"/><path d="M311.0,302.6L325.7,301.0" stroke="#f4f4f4" stroke-width="2.2" stroke-opacity="0.75"/><path d="M338.8,299.5L347.0,298.6" stroke="#f4f4f4" stroke-width="2.2" stroke-opacity="0.82"/><path d="M311.0,307.2L347.0,303.2" stroke="#f4f4f4" stroke-width="1.87" stroke-opacity="0.45"/><path d="M311.0,307.2L320.7,306.1" stroke="#f4f4f4" stroke-width="2.2" stroke-opacity="0.92"/><path d="M321.5,306.0L341.1,303.9" stroke="#f4f4f4" stroke-width="2.2" stroke-opacity="0.84"/><path d="M342.7,303.7L347.0,303.2" stroke="#f4f4f4" stroke-width="2.2" stroke-opacity="0.96"/><path d="M311.0,311.8L347.0,307.8" stroke="#f4f4f4" stroke-width="1.87" stroke-opacity="0.45"/><path d="M311.0,311.8L318.5,311.0" stroke="#f4f4f4" stroke-width="2.2" stroke-opacity="0.79"/><path d="M319.9,310.8L328.5,309.9" stroke="#f4f4f4" stroke-width="2.2" stroke-opacity="0.82"/><path d="M329.2,309.8L343.4,308.2" stroke="#f4f4f4" stroke-width="2.2" stroke-opacity="0.76"/><path d="M344.6,308.1L347.0,307.8" stroke="#f4f4f4" stroke-width="2.2" stroke-opacity="0.80"/><path d="M311.0,316.4L347.0,312.4" stroke="#f4f4f4" stroke-width="1.87" stroke-opacity="0.45"/><path d="M311.0,316.4L331.3,314.1" stroke="#f4f4f4" stroke-width="2.2" stroke-opacity="0.79"/><path d="M332.1,314.1L347.0,312.4" stroke="#f4f4f4" stroke-width="2.2" stroke-opacity="0.96"/><path d="M311.0,321.0L347.0,317.0" stroke="#f4f4f4" stroke-width="1.87" stroke-opacity="0.45"/><path d="M311.0,321.0L322.8,319.7" stroke="#f4f4f4" stroke-width="2.2" stroke-opacity="0.98"/><path d="M323.7,319.6L337.7,318.0" stroke="#f4f4f4" stroke-width="2.2" stroke-opacity="0.91"/><path d="M339.0,317.9L347.0,317.0" stroke="#f4f4f4" stroke-width="2.2" stroke-opacity="0.88"/><path d="M367.0,227.0L424.0,183.6" stroke="#cdcdcd" stroke-width="1.19" stroke-opacity="0.43"/><path d="M367.0,227.0L374.5,221.3" stroke="#cdcdcd" stroke-width="1.4" stroke-opacity="0.95"/><path d="M375.3,220.7L382.1,215.5" stroke="#cdcdcd" stroke-width="1.4" stroke-opacity="0.74"/><path d="M382.9,214.9L385.4,213.0" stroke="#cdcdcd" stroke-width="1.4" stroke-opacity="0.65"/><path d="M386.0,212.5L392.3,207.8" stroke="#cdcdcd" stroke-width="1.4" stroke-opacity="0.81"/><path d="M393.2,207.1L397.4,203.9" stroke="#cdcdcd" stroke-width="1.4" stroke-opacity="0.80"/><path d="M398.4,203.1L402.4,200.1" stroke="#cdcdcd" stroke-width="1.4" stroke-opacity="0.67"/><path d="M403.1,199.5L411.4,193.2" stroke="#cdcdcd" stroke-width="1.4" stroke-opacity="0.67"/><path d="M412.1,192.6L419.6,186.9" stroke="#cdcdcd" stroke-width="1.4" stroke-opacity="0.90"/><path d="M420.2,186.5L424.0,183.6" stroke="#cdcdcd" stroke-width="1.4" stroke-opacity="0.88"/><path d="M372.0,236.7L424.0,191.2" stroke="#cdcdcd" stroke-width="1.19" stroke-opacity="0.43"/><path d="M372.0,236.7L379.2,230.4" stroke="#cdcdcd" stroke-width="1.4" stroke-opacity="0.92"/><path d="M379.8,229.9L383.0,227.1" stroke="#cdcdcd" stroke-width="1.4" stroke-opacity="0.80"/><path d="M383.5,226.7L391.1,220.0" stroke="#cdcdcd" stroke-width="1.4" stroke-opacity="0.76"/><path d="M392.1,219.1L398.8,213.2" stroke="#cdcdcd" stroke-width="1.4" stroke-opacity="0.80"/><path d="M405.0,207.9L411.3,202.3" stroke="#cdcdcd" stroke-width="1.4" stroke-opacity="0.65"/><path d="M418.8,195.7L423.1,192.0" stroke="#cdcdcd" stroke-width="1.4" stroke-opacity="0.91"/><path d="M423.8,191.4L424.0,191.2" stroke="#cdcdcd" stroke-width="1.4" stroke-opacity="0.64"/><path d="M372.0,243.4L424.0,198.8" stroke="#cdcdcd" stroke-width="1.19" stroke-opacity="0.43"/><path d="M372.0,243.4L375.2,240.6" stroke="#cdcdcd" stroke-width="1.4" stroke-opacity="0.61"/><path d="M376.1,239.9L380.5,236.2" stroke="#cdcdcd" stroke-width="1.4" stroke-opacity="0.90"/><path d="M381.4,235.3L389.6,228.3" stroke="#cdcdcd" stroke-width="1.4" stroke-opacity="0.68"/><path d="M390.7,227.4L394.1,224.4" stroke="#cdcdcd" stroke-width="1.4" stroke-opacity="0.71"/><path d="M394.7,223.9L397.5,221.5" stroke="#cdcdcd" stroke-width="1.4" stroke-opacity="0.73"/><path d="M398.5,220.7L402.7,217.1" stroke="#cdcdcd" stroke-width="1.4" stroke-opacity="0.81"/><path d="M403.5,216.4L406.5,213.8" stroke="#cdcdcd" stroke-width="1.4" stroke-opacity="0.90"/><path d="M407.6,212.8L413.1,208.1" stroke="#cdcdcd" stroke-width="1.4" stroke-opacity="0.74"/><path d="M413.8,207.5L421.5,201.0" stroke="#cdcdcd" stroke-width="1.4" stroke-opacity="0.64"/><path d="M422.4,200.2L424.0,198.8" stroke="#cdcdcd" stroke-width="1.4" stroke-opacity="0.84"/><path d="M372.0,250.1L424.0,206.4" stroke="#cdcdcd" stroke-width="1.19" stroke-opacity="0.43"/><path d="M372.0,250.1L375.7,247.0" stroke="#cdcdcd" stroke-width="1.4" stroke-opacity="0.63"/><path d="M376.3,246.5L381.9,241.8" stroke="#cdcdcd" stroke-width="1.4" stroke-opacity="0.94"/><path d="M382.5,241.3L390.7,234.4" stroke="#cdcdcd" stroke-width="1.4" stroke-opacity="0.70"/><path d="M391.4,233.8L397.7,228.5" stroke="#cdcdcd" stroke-width="1.4" stroke-opacity="0.80"/><path d="M406.3,221.3L411.4,217.0" stroke="#cdcdcd" stroke-width="1.4" stroke-opacity="0.80"/><path d="M412.3,216.2L415.6,213.4" stroke="#cdcdcd" stroke-width="1.4" stroke-opacity="0.85"/><path d="M416.5,212.7L420.8,209.1" stroke="#cdcdcd" stroke-width="1.4" stroke-opacity="0.94"/><path d="M421.8,208.3L424.0,206.4" stroke="#cdcdcd" stroke-width="1.4" stroke-opacity="0.72"/><path d="M372.0,256.8L424.0,214.0" stroke="#cdcdcd" stroke-width="1.19" stroke-opacity="0.43"/><path d="M372.0,256.8L376.8,252.9" stroke="#cdcdcd" stroke-width="1.4" stroke-opacity="0.69"/><path d="M377.8,252.0L384.7,246.4" stroke="#cdcdcd" stroke-width="1.4" stroke-opacity="0.57"/><path d="M385.8,245.4L393.3,239.3" stroke="#cdcdcd" stroke-width="1.4" stroke-opacity="0.79"/><path d="M394.2,238.6L401.9,232.2" stroke="#cdcdcd" stroke-width="1.4" stroke-opacity="0.75"/><path d="M402.7,231.5L410.5,225.1" stroke="#cdcdcd" stroke-width="1.4" stroke-opacity="0.93"/><path d="M411.5,224.3L419.3,217.9" stroke="#cdcdcd" stroke-width="1.4" stroke-opacity="0.72"/><path d="M420.3,217.1L424.0,214.0" stroke="#cdcdcd" stroke-width="1.4" stroke-opacity="0.92"/><path d="M372.0,263.5L424.0,221.6" stroke="#cdcdcd" stroke-width="1.19" stroke-opacity="0.43"/><path d="M372.0,263.5L377.1,259.4" stroke="#cdcdcd" stroke-width="1.4" stroke-opacity="0.80"/><path d="M377.6,259.0L384.1,253.7" stroke="#cdcdcd" stroke-width="1.4" stroke-opacity="0.86"/><path d="M384.8,253.2L389.6,249.4" stroke="#cdcdcd" stroke-width="1.4" stroke-opacity="0.92"/><path d="M390.7,248.4L398.9,241.8" stroke="#cdcdcd" stroke-width="1.4" stroke-opacity="0.62"/><path d="M399.7,241.2L407.0,235.3" stroke="#cdcdcd" stroke-width="1.4" stroke-opacity="0.67"/><path d="M407.9,234.6L415.7,228.3" stroke="#cdcdcd" stroke-width="1.4" stroke-opacity="0.65"/><path d="M416.3,227.8L421.9,223.3" stroke="#cdcdcd" stroke-width="1.4" stroke-opacity="0.95"/><path d="M422.5,222.8L424.0,221.6" stroke="#cdcdcd" stroke-width="1.4" stroke-opacity="0.93"/><path d="M372.0,270.2L424.0,229.2" stroke="#cdcdcd" stroke-width="1.19" stroke-opacity="0.43"/><path d="M372.0,270.2L379.4,264.4" stroke="#cdcdcd" stroke-width="1.4" stroke-opacity="0.81"/><path d="M384.1,260.7L388.3,257.3" stroke="#cdcdcd" stroke-width="1.4" stroke-opacity="0.60"/><path d="M389.6,256.3L394.8,252.2" stroke="#cdcdcd" stroke-width="1.4" stroke-opacity="0.84"/><path d="M396.0,251.3L403.9,245.1" stroke="#cdcdcd" stroke-width="1.4" stroke-opacity="0.63"/><path d="M404.6,244.5L409.9,240.3" stroke="#cdcdcd" stroke-width="1.4" stroke-opacity="0.62"/><path d="M411.1,239.4L414.7,236.5" stroke="#cdcdcd" stroke-width="1.4" stroke-opacity="0.88"/><path d="M415.9,235.6L418.5,233.5" stroke="#cdcdcd" stroke-width="1.4" stroke-opacity="0.67"/><path d="M419.3,232.9L424.0,229.2" stroke="#cdcdcd" stroke-width="1.4" stroke-opacity="0.68"/><path d="M372.0,276.9L424.0,236.8" stroke="#cdcdcd" stroke-width="1.19" stroke-opacity="0.43"/><path d="M372.0,276.9L378.7,271.8" stroke="#cdcdcd" stroke-width="1.4" stroke-opacity="0.78"/><path d="M379.2,271.3L383.0,268.4" stroke="#cdcdcd" stroke-width="1.4" stroke-opacity="0.68"/><path d="M383.6,268.0L387.1,265.3" stroke="#cdcdcd" stroke-width="1.4" stroke-opacity="0.70"/><path d="M388.2,264.4L392.9,260.8" stroke="#cdcdcd" stroke-width="1.4" stroke-opacity="0.61"/><path d="M393.8,260.1L397.6,257.2" stroke="#cdcdcd" stroke-width="1.4" stroke-opacity="0.60"/><path d="M398.6,256.4L402.7,253.2" stroke="#cdcdcd" stroke-width="1.4" stroke-opacity="0.92"/><path d="M403.9,252.3L409.0,248.3" stroke="#cdcdcd" stroke-width="1.4" stroke-opacity="0.75"/><path d="M409.6,247.9L415.6,243.3" stroke="#cdcdcd" stroke-width="1.4" stroke-opacity="0.85"/><path d="M416.7,242.4L419.7,240.2" stroke="#cdcdcd" stroke-width="1.4" stroke-opacity="0.66"/><path d="M420.3,239.6L424.0,236.8" stroke="#cdcdcd" stroke-width="1.4" stroke-opacity="0.88"/><path d="M373.0,274.0L420.0,271.0" stroke="#b8b8b8" stroke-width="1.275" stroke-opacity="0.41"/><path d="M388.3,273.0L400.2,272.3" stroke="#b8b8b8" stroke-width="1.5" stroke-opacity="0.65"/><path d="M401.3,272.2L407.6,271.8" stroke="#b8b8b8" stroke-width="1.5" stroke-opacity="0.73"/><path d="M408.5,271.7L419.5,271.0" stroke="#b8b8b8" stroke-width="1.5" stroke-opacity="0.76"/><path d="M377.0,283.0L420.0,286.0" stroke="#b8b8b8" stroke-width="1.275" stroke-opacity="0.41"/><path d="M377.0,283.0L389.8,283.9" stroke="#b8b8b8" stroke-width="1.5" stroke-opacity="0.76"/><path d="M391.4,284.0L397.6,284.4" stroke="#b8b8b8" stroke-width="1.5" stroke-opacity="0.86"/><path d="M398.8,284.5L405.6,285.0" stroke="#b8b8b8" stroke-width="1.5" stroke-opacity="0.69"/><path d="M407.0,285.1L419.3,286.0" stroke="#b8b8b8" stroke-width="1.5" stroke-opacity="0.77"/><path d="M369.0,291.0L420.0,295.0" stroke="#b8b8b8" stroke-width="1.275" stroke-opacity="0.41"/><path d="M369.0,291.0L379.2,291.8" stroke="#b8b8b8" stroke-width="1.5" stroke-opacity="0.89"/><path d="M380.4,291.9L391.9,292.8" stroke="#b8b8b8" stroke-width="1.5" stroke-opacity="0.66"/><path d="M399.8,293.4L408.6,294.1" stroke="#b8b8b8" stroke-width="1.5" stroke-opacity="0.83"/><path d="M410.0,294.2L415.2,294.6" stroke="#b8b8b8" stroke-width="1.5" stroke-opacity="0.75"/><path d="M416.3,294.7L420.0,295.0" stroke="#b8b8b8" stroke-width="1.5" stroke-opacity="0.86"/><path d="M367.0,298.0L420.0,304.0" stroke="#b8b8b8" stroke-width="1.275" stroke-opacity="0.41"/><path d="M367.0,298.0L371.9,298.6" stroke="#b8b8b8" stroke-width="1.5" stroke-opacity="0.73"/><path d="M373.0,298.7L380.1,299.5" stroke="#b8b8b8" stroke-width="1.5" stroke-opacity="0.88"/><path d="M381.5,299.6L387.7,300.3" stroke="#b8b8b8" stroke-width="1.5" stroke-opacity="0.86"/><path d="M388.9,300.5L401.6,301.9" stroke="#b8b8b8" stroke-width="1.5" stroke-opacity="0.88"/><path d="M402.6,302.0L410.6,302.9" stroke="#b8b8b8" stroke-width="1.5" stroke-opacity="0.64"/><path d="M411.3,303.0L420.0,304.0" stroke="#b8b8b8" stroke-width="1.5" stroke-opacity="0.63"/><path d="M367.0,306.0L413.0,309.0" stroke="#b8b8b8" stroke-width="1.275" stroke-opacity="0.41"/><path d="M367.0,306.0L376.0,306.6" stroke="#b8b8b8" stroke-width="1.5" stroke-opacity="0.89"/><path d="M376.8,306.6L390.1,307.5" stroke="#b8b8b8" stroke-width="1.5" stroke-opacity="0.79"/><path d="M391.0,307.6L399.7,308.1" stroke="#b8b8b8" stroke-width="1.5" stroke-opacity="0.89"/><path d="M401.3,308.2L413.0,309.0" stroke="#b8b8b8" stroke-width="1.5" stroke-opacity="0.84"/><path d="M425.0,183.0L449.0,184.0" stroke="#e8e8e8" stroke-width="1.53" stroke-opacity="0.41"/><path d="M425.0,183.0L440.9,183.7" stroke="#e8e8e8" stroke-width="1.8" stroke-opacity="0.80"/><path d="M442.5,183.7L449.0,184.0" stroke="#e8e8e8" stroke-width="1.8" stroke-opacity="0.68"/><path d="M424.5,190.7L462.0,193.0" stroke="#f0f0f0" stroke-width="1.7" stroke-opacity="0.45"/><path d="M424.5,190.7L434.0,191.3" stroke="#f0f0f0" stroke-width="2.0" stroke-opacity="0.84"/><path d="M434.6,191.3L447.9,192.1" stroke="#f0f0f0" stroke-width="2.0" stroke-opacity="0.78"/><path d="M449.1,192.2L462.0,193.0" stroke="#f0f0f0" stroke-width="2.0" stroke-opacity="0.90"/><path d="M424.5,198.0L430.0,198.0" stroke="#f0f0f0" stroke-width="2.0" stroke-opacity="1.00"/><path d="M424.5,206.6L430.0,206.6" stroke="#f0f0f0" stroke-width="2.0" stroke-opacity="1.00"/><path d="M424.5,214.0L430.0,214.0" stroke="#f0f0f0" stroke-width="2.0" stroke-opacity="1.00"/><path d="M424.5,221.8L430.0,221.8" stroke="#f0f0f0" stroke-width="2.0" stroke-opacity="1.00"/><path d="M441.7,209.4L451.4,209.7" stroke="#eeeeee" stroke-width="1.7" stroke-opacity="0.45"/><path d="M441.7,209.4L450.9,209.7" stroke="#eeeeee" stroke-width="2.0" stroke-opacity="0.95"/><path d="M441.7,217.0L451.4,217.3" stroke="#eeeeee" stroke-width="1.7" stroke-opacity="0.45"/><path d="M441.7,217.0L449.2,217.2" stroke="#eeeeee" stroke-width="2.0" stroke-opacity="0.96"/><path d="M450.0,217.3L451.4,217.3" stroke="#eeeeee" stroke-width="2.0" stroke-opacity="0.92"/><path d="M441.7,224.6L451.4,224.9" stroke="#eeeeee" stroke-width="1.7" stroke-opacity="0.45"/><path d="M441.7,224.6L451.4,224.9" stroke="#eeeeee" stroke-width="2.0" stroke-opacity="0.78"/><path d="M441.7,231.5L451.4,231.8" stroke="#eeeeee" stroke-width="1.7" stroke-opacity="0.45"/><path d="M441.7,231.5L450.9,231.8" stroke="#eeeeee" stroke-width="2.0" stroke-opacity="0.83"/><path d="M442.0,192.0L450.0,192.0" stroke="#b04050" stroke-width="1.4" stroke-opacity="0.60"/><path d="M447.0,206.0L452.0,206.0" stroke="#903848" stroke-width="1.4" stroke-opacity="0.60"/><path d="M449.0,215.0L455.0,215.0" stroke="#903848" stroke-width="1.4" stroke-opacity="0.60"/><path d="M437.0,200.0L439.0,199.0" stroke="#aaaaaa" stroke-width="1.3" stroke-opacity="0.70"/><path d="M438.0,207.0L440.0,206.0" stroke="#aaaaaa" stroke-width="1.3" stroke-opacity="0.70"/><path d="M439.0,215.0L441.0,214.0" stroke="#aaaaaa" stroke-width="1.3" stroke-opacity="0.70"/><path d="M440.0,222.0L442.0,221.0" stroke="#aaaaaa" stroke-width="1.3" stroke-opacity="0.70"/><path d="M456.0,177.0L461.0,177.0" stroke="#dddddd" stroke-width="1.8" stroke-opacity="0.85"/><path d="M457.0,186.6L462.0,186.6" stroke="#bbbbbb" stroke-width="1.8" stroke-opacity="0.85"/><path d="M471.0,179.0L475.0,179.0" stroke="#dddddd" stroke-width="1.8" stroke-opacity="0.85"/><path d="M471.0,168.0L475.0,168.0" stroke="#dddddd" stroke-width="1.8" stroke-opacity="0.85"/><path d="M476.0,167.0L480.0,167.0" stroke="#d07080" stroke-width="1.8" stroke-opacity="0.85"/><path d="M484.5,165.0L486.5,165.0" stroke="#bbbbbb" stroke-width="1.8" stroke-opacity="0.85"/><path d="M421.0,237.0L518.0,246.3" stroke="#eeeeee" stroke-width="1.7" stroke-opacity="0.45"/><path d="M436.1,238.5L450.3,239.8" stroke="#eeeeee" stroke-width="2.0" stroke-opacity="0.77"/><path d="M451.6,239.9L465.8,241.3" stroke="#eeeeee" stroke-width="2.0" stroke-opacity="0.96"/><path d="M467.4,241.5L483.4,243.0" stroke="#eeeeee" stroke-width="2.0" stroke-opacity="0.82"/><path d="M484.9,243.1L494.3,244.0" stroke="#eeeeee" stroke-width="2.0" stroke-opacity="0.90"/><path d="M495.0,244.1L518.0,246.3" stroke="#eeeeee" stroke-width="2.0" stroke-opacity="0.81"/><path d="M421.0,242.5L518.0,251.8" stroke="#eeeeee" stroke-width="1.7" stroke-opacity="0.45"/><path d="M421.0,242.5L431.0,243.5" stroke="#eeeeee" stroke-width="2.0" stroke-opacity="0.94"/><path d="M431.7,243.5L443.6,244.7" stroke="#eeeeee" stroke-width="2.0" stroke-opacity="0.99"/><path d="M444.5,244.8L461.8,246.4" stroke="#eeeeee" stroke-width="2.0" stroke-opacity="0.97"/><path d="M463.1,246.5L477.2,247.9" stroke="#eeeeee" stroke-width="2.0" stroke-opacity="0.83"/><path d="M478.0,248.0L491.0,249.2" stroke="#eeeeee" stroke-width="2.0" stroke-opacity="0.82"/><path d="M492.0,249.3L508.5,250.9" stroke="#eeeeee" stroke-width="2.0" stroke-opacity="0.94"/><path d="M509.4,251.0L518.0,251.8" stroke="#eeeeee" stroke-width="2.0" stroke-opacity="0.99"/><path d="M421.0,248.0L471.0,256.0" stroke="#eeeeee" stroke-width="1.7" stroke-opacity="0.45"/><path d="M421.0,248.0L442.2,251.4" stroke="#eeeeee" stroke-width="2.0" stroke-opacity="0.80"/><path d="M443.8,251.6L458.5,254.0" stroke="#eeeeee" stroke-width="2.0" stroke-opacity="0.77"/><path d="M459.3,254.1L471.0,256.0" stroke="#eeeeee" stroke-width="2.0" stroke-opacity="0.76"/><path d="M421.0,253.5L471.0,261.5" stroke="#eeeeee" stroke-width="1.7" stroke-opacity="0.45"/><path d="M421.0,253.5L434.5,255.7" stroke="#eeeeee" stroke-width="2.0" stroke-opacity="0.98"/><path d="M435.5,255.8L452.0,258.5" stroke="#eeeeee" stroke-width="2.0" stroke-opacity="0.90"/><path d="M453.0,258.6L471.0,261.5" stroke="#eeeeee" stroke-width="2.0" stroke-opacity="0.96"/><path d="M421.0,259.0L471.0,267.0" stroke="#eeeeee" stroke-width="1.7" stroke-opacity="0.45"/><path d="M421.0,259.0L439.2,261.9" stroke="#eeeeee" stroke-width="2.0" stroke-opacity="0.83"/><path d="M440.0,262.0L450.7,263.8" stroke="#eeeeee" stroke-width="2.0" stroke-opacity="0.89"/><path d="M451.5,263.9L471.0,267.0" stroke="#eeeeee" stroke-width="2.0" stroke-opacity="0.86"/><path d="M421.0,264.5L471.0,272.5" stroke="#eeeeee" stroke-width="1.7" stroke-opacity="0.45"/><path d="M421.0,264.5L430.3,266.0" stroke="#eeeeee" stroke-width="2.0" stroke-opacity="0.91"/><path d="M431.0,266.1L447.8,268.8" stroke="#eeeeee" stroke-width="2.0" stroke-opacity="0.88"/><path d="M449.0,269.0L467.0,271.9" stroke="#eeeeee" stroke-width="2.0" stroke-opacity="0.94"/><path d="M467.6,272.0L471.0,272.5" stroke="#eeeeee" stroke-width="2.0" stroke-opacity="0.86"/><path d="M421.0,270.0L471.0,278.0" stroke="#eeeeee" stroke-width="1.7" stroke-opacity="0.45"/><path d="M421.0,270.0L442.9,273.5" stroke="#eeeeee" stroke-width="2.0" stroke-opacity="0.88"/><path d="M444.1,273.7L471.0,278.0" stroke="#eeeeee" stroke-width="2.0" stroke-opacity="0.86"/><path d="M421.0,275.5L437.0,278.1" stroke="#eeeeee" stroke-width="1.7" stroke-opacity="0.45"/><path d="M421.0,275.5L437.0,278.1" stroke="#eeeeee" stroke-width="2.0" stroke-opacity="0.84"/><path d="M421.0,281.0L437.0,283.6" stroke="#eeeeee" stroke-width="1.7" stroke-opacity="0.45"/><path d="M421.0,281.0L437.0,283.6" stroke="#eeeeee" stroke-width="2.0" stroke-opacity="0.79"/><path d="M421.0,286.5L437.0,289.1" stroke="#eeeeee" stroke-width="1.7" stroke-opacity="0.45"/><path d="M421.0,286.5L437.0,289.1" stroke="#eeeeee" stroke-width="2.0" stroke-opacity="0.99"/><path d="M472.0,261.6L518.0,268.1" stroke="#eeeeee" stroke-width="1.7" stroke-opacity="0.45"/><path d="M472.0,261.6L490.9,264.3" stroke="#eeeeee" stroke-width="2.0" stroke-opacity="0.91"/><path d="M492.4,264.5L504.3,266.2" stroke="#eeeeee" stroke-width="2.0" stroke-opacity="0.94"/><path d="M472.0,267.5L518.0,274.0" stroke="#eeeeee" stroke-width="1.7" stroke-opacity="0.45"/><path d="M472.0,267.5L488.6,269.9" stroke="#eeeeee" stroke-width="2.0" stroke-opacity="0.88"/><path d="M489.9,270.0L509.5,272.8" stroke="#eeeeee" stroke-width="2.0" stroke-opacity="0.86"/><path d="M510.9,273.0L518.0,274.0" stroke="#eeeeee" stroke-width="2.0" stroke-opacity="0.91"/><path d="M472.0,273.4L518.0,279.9" stroke="#eeeeee" stroke-width="1.7" stroke-opacity="0.45"/><path d="M472.0,273.4L487.1,275.5" stroke="#eeeeee" stroke-width="2.0" stroke-opacity="0.83"/><path d="M488.3,275.7L516.1,279.6" stroke="#eeeeee" stroke-width="2.0" stroke-opacity="0.96"/><path d="M517.3,279.8L518.0,279.9" stroke="#eeeeee" stroke-width="2.0" stroke-opacity="0.91"/><path d="M472.0,279.3L518.0,285.8" stroke="#eeeeee" stroke-width="1.7" stroke-opacity="0.45"/><path d="M472.0,279.3L495.6,282.6" stroke="#eeeeee" stroke-width="2.0" stroke-opacity="0.94"/><path d="M496.4,282.8L511.7,284.9" stroke="#eeeeee" stroke-width="2.0" stroke-opacity="0.87"/><path d="M512.4,285.0L518.0,285.8" stroke="#eeeeee" stroke-width="2.0" stroke-opacity="0.97"/><path d="M472.0,285.2L518.0,291.7" stroke="#eeeeee" stroke-width="1.7" stroke-opacity="0.45"/><path d="M472.0,285.2L483.1,286.8" stroke="#eeeeee" stroke-width="2.0" stroke-opacity="0.81"/><path d="M484.2,286.9L496.3,288.6" stroke="#eeeeee" stroke-width="2.0" stroke-opacity="0.78"/><path d="M496.9,288.7L510.8,290.7" stroke="#eeeeee" stroke-width="2.0" stroke-opacity="0.80"/><path d="M511.8,290.8L518.0,291.7" stroke="#eeeeee" stroke-width="2.0" stroke-opacity="0.82"/><path d="M472.0,291.1L518.0,297.6" stroke="#eeeeee" stroke-width="1.7" stroke-opacity="0.45"/><path d="M472.0,291.1L487.5,293.3" stroke="#eeeeee" stroke-width="2.0" stroke-opacity="0.79"/><path d="M488.9,293.5L508.9,296.3" stroke="#eeeeee" stroke-width="2.0" stroke-opacity="0.82"/><path d="M510.1,296.5L518.0,297.6" stroke="#eeeeee" stroke-width="2.0" stroke-opacity="0.97"/><path d="M472.0,297.0L518.0,303.5" stroke="#eeeeee" stroke-width="1.7" stroke-opacity="0.45"/><path d="M472.0,297.0L494.0,300.1" stroke="#eeeeee" stroke-width="2.0" stroke-opacity="0.95"/><path d="M494.6,300.2L515.0,303.1" stroke="#eeeeee" stroke-width="2.0" stroke-opacity="0.76"/><path d="M515.8,303.2L518.0,303.5" stroke="#eeeeee" stroke-width="2.0" stroke-opacity="0.84"/><path d="M481.0,255.0L516.0,256.0" stroke="#9a9a9a" stroke-width="1.275" stroke-opacity="0.36"/><path d="M481.0,255.0L496.4,255.4" stroke="#9a9a9a" stroke-width="1.5" stroke-opacity="0.79"/><path d="M504.5,255.7L516.0,256.0" stroke="#9a9a9a" stroke-width="1.5" stroke-opacity="0.78"/><path d="M518.0,254.0L559.0,259.5" stroke="#eaeaea" stroke-width="1.7" stroke-opacity="0.45"/><path d="M518.0,254.0L527.3,255.3" stroke="#eaeaea" stroke-width="2.0" stroke-opacity="0.88"/><path d="M528.3,255.4L542.2,257.2" stroke="#eaeaea" stroke-width="2.0" stroke-opacity="0.79"/><path d="M543.1,257.4L558.3,259.4" stroke="#eaeaea" stroke-width="2.0" stroke-opacity="0.81"/><path d="M518.0,260.0L559.0,265.5" stroke="#eaeaea" stroke-width="1.7" stroke-opacity="0.45"/><path d="M518.0,260.0L533.2,262.0" stroke="#eaeaea" stroke-width="2.0" stroke-opacity="0.86"/><path d="M534.6,262.2L545.8,263.7" stroke="#eaeaea" stroke-width="2.0" stroke-opacity="0.97"/><path d="M547.4,263.9L559.0,265.5" stroke="#eaeaea" stroke-width="2.0" stroke-opacity="0.97"/><path d="M518.0,266.0L559.0,271.5" stroke="#eaeaea" stroke-width="1.7" stroke-opacity="0.45"/><path d="M518.0,266.0L527.2,267.2" stroke="#eaeaea" stroke-width="2.0" stroke-opacity="0.96"/><path d="M528.4,267.4L541.8,269.2" stroke="#eaeaea" stroke-width="2.0" stroke-opacity="0.88"/><path d="M542.7,269.3L555.8,271.1" stroke="#eaeaea" stroke-width="2.0" stroke-opacity="0.98"/><path d="M557.3,271.3L559.0,271.5" stroke="#eaeaea" stroke-width="2.0" stroke-opacity="0.95"/><path d="M518.0,272.0L559.0,277.5" stroke="#eaeaea" stroke-width="1.7" stroke-opacity="0.45"/><path d="M518.0,272.0L542.9,275.3" stroke="#eaeaea" stroke-width="2.0" stroke-opacity="0.78"/><path d="M544.0,275.5L559.0,277.5" stroke="#eaeaea" stroke-width="2.0" stroke-opacity="0.90"/><path d="M518.0,278.0L559.0,283.5" stroke="#eaeaea" stroke-width="1.7" stroke-opacity="0.45"/><path d="M518.0,278.0L535.8,280.4" stroke="#eaeaea" stroke-width="2.0" stroke-opacity="0.84"/><path d="M536.6,280.5L559.0,283.5" stroke="#eaeaea" stroke-width="2.0" stroke-opacity="0.75"/><path d="M518.0,284.0L559.0,289.5" stroke="#eaeaea" stroke-width="1.7" stroke-opacity="0.45"/><path d="M518.0,284.0L540.3,287.0" stroke="#eaeaea" stroke-width="2.0" stroke-opacity="0.96"/><path d="M540.9,287.1L552.6,288.6" stroke="#eaeaea" stroke-width="2.0" stroke-opacity="0.98"/><path d="M553.5,288.8L559.0,289.5" stroke="#eaeaea" stroke-width="2.0" stroke-opacity="0.87"/><path d="M518.0,290.0L559.0,295.5" stroke="#eaeaea" stroke-width="1.7" stroke-opacity="0.45"/><path d="M518.0,290.0L530.3,291.6" stroke="#eaeaea" stroke-width="2.0" stroke-opacity="1.00"/><path d="M531.4,291.8L553.3,294.7" stroke="#eaeaea" stroke-width="2.0" stroke-opacity="0.82"/><path d="M554.3,294.9L559.0,295.5" stroke="#eaeaea" stroke-width="2.0" stroke-opacity="0.81"/><path d="M518.0,296.0L559.0,301.5" stroke="#eaeaea" stroke-width="1.7" stroke-opacity="0.45"/><path d="M518.0,296.0L528.5,297.4" stroke="#eaeaea" stroke-width="2.0" stroke-opacity="0.90"/><path d="M529.8,297.6L542.8,299.3" stroke="#eaeaea" stroke-width="2.0" stroke-opacity="0.99"/><path d="M543.9,299.5L556.5,301.2" stroke="#eaeaea" stroke-width="2.0" stroke-opacity="0.91"/><path d="M557.8,301.3L559.0,301.5" stroke="#eaeaea" stroke-width="2.0" stroke-opacity="0.84"/><path d="M563.0,254.5L601.0,262.1" stroke="#e6e6e6" stroke-width="1.7" stroke-opacity="0.45"/><path d="M563.0,254.5L572.2,256.3" stroke="#e6e6e6" stroke-width="2.0" stroke-opacity="0.90"/><path d="M572.8,256.5L582.7,258.4" stroke="#e6e6e6" stroke-width="2.0" stroke-opacity="0.94"/><path d="M584.0,258.7L596.3,261.2" stroke="#e6e6e6" stroke-width="2.0" stroke-opacity="0.95"/><path d="M597.0,261.3L601.0,262.1" stroke="#e6e6e6" stroke-width="2.0" stroke-opacity="0.87"/><path d="M601.0,262.1L605.0,266.1" stroke="#cfcfcf" stroke-width="1.6" stroke-opacity="0.90"/><path d="M563.0,262.0L598.0,269.0" stroke="#e6e6e6" stroke-width="1.7" stroke-opacity="0.45"/><path d="M563.0,262.0L574.8,264.4" stroke="#e6e6e6" stroke-width="2.0" stroke-opacity="0.90"/><path d="M575.9,264.6L593.0,268.0" stroke="#e6e6e6" stroke-width="2.0" stroke-opacity="0.74"/><path d="M593.9,268.2L598.0,269.0" stroke="#e6e6e6" stroke-width="2.0" stroke-opacity="0.70"/><path d="M598.0,269.0L602.0,273.0" stroke="#cfcfcf" stroke-width="1.6" stroke-opacity="0.90"/><path d="M563.6,269.7L596.0,276.2" stroke="#e6e6e6" stroke-width="1.7" stroke-opacity="0.45"/><path d="M563.6,269.7L580.8,273.1" stroke="#e6e6e6" stroke-width="2.0" stroke-opacity="0.88"/><path d="M582.1,273.4L590.1,275.0" stroke="#e6e6e6" stroke-width="2.0" stroke-opacity="0.80"/><path d="M591.6,275.3L596.0,276.2" stroke="#e6e6e6" stroke-width="2.0" stroke-opacity="0.89"/><path d="M563.9,276.6L594.0,282.6" stroke="#e6e6e6" stroke-width="1.7" stroke-opacity="0.45"/><path d="M563.9,276.6L571.5,278.1" stroke="#e6e6e6" stroke-width="2.0" stroke-opacity="0.89"/><path d="M572.7,278.4L581.1,280.0" stroke="#e6e6e6" stroke-width="2.0" stroke-opacity="0.73"/><path d="M582.6,280.3L594.0,282.6" stroke="#e6e6e6" stroke-width="2.0" stroke-opacity="0.83"/><path d="M564.2,282.0L592.0,287.6" stroke="#e6e6e6" stroke-width="1.7" stroke-opacity="0.45"/><path d="M564.2,282.0L579.9,285.1" stroke="#e6e6e6" stroke-width="2.0" stroke-opacity="0.86"/><path d="M581.2,285.4L592.0,287.6" stroke="#e6e6e6" stroke-width="2.0" stroke-opacity="0.93"/><path d="M592.0,287.6 Q596.0,293.6 596.2,317.6" stroke="#bdbdbd" stroke-width="1.5" fill="none" stroke-opacity="0.8" stroke-dasharray="4 1.5"/><path d="M564.5,288.0L590.0,293.1" stroke="#e6e6e6" stroke-width="1.7" stroke-opacity="0.45"/><path d="M564.5,288.0L577.1,290.5" stroke="#e6e6e6" stroke-width="2.0" stroke-opacity="0.99"/><path d="M578.3,290.8L589.5,293.0" stroke="#e6e6e6" stroke-width="2.0" stroke-opacity="0.82"/><path d="M590.0,293.1 Q594.0,299.1 594.5,325.1" stroke="#bdbdbd" stroke-width="1.5" fill="none" stroke-opacity="0.8" stroke-dasharray="4 1.5"/><path d="M564.8,294.6L588.0,299.2" stroke="#e6e6e6" stroke-width="1.7" stroke-opacity="0.45"/><path d="M564.8,294.6L572.5,296.1" stroke="#e6e6e6" stroke-width="2.0" stroke-opacity="0.70"/><path d="M573.8,296.4L583.3,298.3" stroke="#e6e6e6" stroke-width="2.0" stroke-opacity="0.70"/><path d="M584.3,298.5L588.0,299.2" stroke="#e6e6e6" stroke-width="2.0" stroke-opacity="0.70"/><path d="M588.0,299.2 Q592.0,305.2 592.8,333.2" stroke="#bdbdbd" stroke-width="1.5" fill="none" stroke-opacity="0.8" stroke-dasharray="4 1.5"/><path d="M565.1,300.8L586.0,305.0" stroke="#e6e6e6" stroke-width="1.7" stroke-opacity="0.45"/><path d="M565.1,300.8L573.7,302.5" stroke="#e6e6e6" stroke-width="2.0" stroke-opacity="0.81"/><path d="M575.2,302.8L586.0,305.0" stroke="#e6e6e6" stroke-width="2.0" stroke-opacity="0.85"/><path d="M586.0,305.0 Q590.0,311.0 591.1,341.0" stroke="#bdbdbd" stroke-width="1.5" fill="none" stroke-opacity="0.8" stroke-dasharray="4 1.5"/><path d="M587.0,330.0L591.0,330.0" stroke="#eeeeee" stroke-width="2" stroke-opacity="1.00"/><path d="M606.0,265.0L641.0,272.0" stroke="#8a8a8a" stroke-width="1.275" stroke-opacity="0.38"/><path d="M606.0,265.0L609.3,265.7" stroke="#8a8a8a" stroke-width="1.5" stroke-opacity="0.55"/><path d="M610.2,265.8L617.8,267.4" stroke="#8a8a8a" stroke-width="1.5" stroke-opacity="0.62"/><path d="M619.3,267.7L623.4,268.5" stroke="#8a8a8a" stroke-width="1.5" stroke-opacity="0.58"/><path d="M624.0,268.6L630.2,269.8" stroke="#8a8a8a" stroke-width="1.5" stroke-opacity="0.64"/><path d="M631.1,270.0L638.7,271.5" stroke="#8a8a8a" stroke-width="1.5" stroke-opacity="0.52"/><path d="M639.8,271.8L641.0,272.0" stroke="#8a8a8a" stroke-width="1.5" stroke-opacity="0.79"/><path d="M606.0,271.0L637.0,277.2" stroke="#8a8a8a" stroke-width="1.275" stroke-opacity="0.38"/><path d="M610.5,271.9L618.5,273.5" stroke="#8a8a8a" stroke-width="1.5" stroke-opacity="0.80"/><path d="M619.3,273.7L624.5,274.7" stroke="#8a8a8a" stroke-width="1.5" stroke-opacity="0.59"/><path d="M626.0,275.0L629.3,275.7" stroke="#8a8a8a" stroke-width="1.5" stroke-opacity="0.76"/><path d="M630.5,275.9L637.0,277.2" stroke="#8a8a8a" stroke-width="1.5" stroke-opacity="0.77"/><path d="M606.0,277.0L632.0,282.2" stroke="#8a8a8a" stroke-width="1.275" stroke-opacity="0.38"/><path d="M612.4,278.3L617.2,279.2" stroke="#8a8a8a" stroke-width="1.5" stroke-opacity="0.73"/><path d="M626.1,281.0L632.0,282.2" stroke="#8a8a8a" stroke-width="1.5" stroke-opacity="0.80"/><path d="M606.0,284.0L628.0,288.4" stroke="#8a8a8a" stroke-width="1.275" stroke-opacity="0.38"/><path d="M606.0,284.0L614.5,285.7" stroke="#8a8a8a" stroke-width="1.5" stroke-opacity="0.70"/><path d="M615.3,285.9L624.1,287.6" stroke="#8a8a8a" stroke-width="1.5" stroke-opacity="0.54"/><path d="M625.0,287.8L628.0,288.4" stroke="#8a8a8a" stroke-width="1.5" stroke-opacity="0.79"/><path d="M606.0,291.0L626.0,295.0" stroke="#8a8a8a" stroke-width="1.275" stroke-opacity="0.38"/><path d="M606.0,291.0L611.4,292.1" stroke="#8a8a8a" stroke-width="1.5" stroke-opacity="0.68"/><path d="M612.5,292.3L618.4,293.5" stroke="#8a8a8a" stroke-width="1.5" stroke-opacity="0.70"/><path d="M619.7,293.7L624.0,294.6" stroke="#8a8a8a" stroke-width="1.5" stroke-opacity="0.73"/><path d="M625.4,294.9L626.0,295.0" stroke="#8a8a8a" stroke-width="1.5" stroke-opacity="0.56"/><path d="M606.0,298.0L623.0,301.4" stroke="#8a8a8a" stroke-width="1.275" stroke-opacity="0.38"/><path d="M606.0,298.0L614.4,299.7" stroke="#8a8a8a" stroke-width="1.5" stroke-opacity="0.53"/><path d="M622.2,301.2L623.0,301.4" stroke="#8a8a8a" stroke-width="1.5" stroke-opacity="0.44"/><path d="M414.9,304.0L471.0,316.0" stroke="#6e6e6e" stroke-width="1.36" stroke-opacity="0.34"/><path d="M414.9,304.0L425.8,306.3" stroke="#6e6e6e" stroke-width="1.6" stroke-opacity="0.60"/><path d="M426.5,306.5L439.6,309.3" stroke="#6e6e6e" stroke-width="1.6" stroke-opacity="0.59"/><path d="M440.5,309.5L452.9,312.1" stroke="#6e6e6e" stroke-width="1.6" stroke-opacity="0.53"/><path d="M454.0,312.4L459.3,313.5" stroke="#6e6e6e" stroke-width="1.6" stroke-opacity="0.72"/><path d="M460.3,313.7L468.3,315.4" stroke="#6e6e6e" stroke-width="1.6" stroke-opacity="0.50"/><path d="M469.2,315.6L471.0,316.0" stroke="#6e6e6e" stroke-width="1.6" stroke-opacity="0.74"/><path d="M410.4,310.4L471.0,322.4" stroke="#6e6e6e" stroke-width="1.36" stroke-opacity="0.34"/><path d="M410.4,310.4L418.3,312.0" stroke="#6e6e6e" stroke-width="1.6" stroke-opacity="0.63"/><path d="M419.6,312.2L429.9,314.3" stroke="#6e6e6e" stroke-width="1.6" stroke-opacity="0.38"/><path d="M431.4,314.6L439.7,316.2" stroke="#6e6e6e" stroke-width="1.6" stroke-opacity="0.51"/><path d="M456.1,319.4L464.4,321.1" stroke="#6e6e6e" stroke-width="1.6" stroke-opacity="0.67"/><path d="M466.0,321.4L471.0,322.4" stroke="#6e6e6e" stroke-width="1.6" stroke-opacity="0.70"/><path d="M415.8,316.8L471.0,328.8" stroke="#6e6e6e" stroke-width="1.36" stroke-opacity="0.34"/><path d="M422.3,318.2L432.7,320.5" stroke="#6e6e6e" stroke-width="1.6" stroke-opacity="0.65"/><path d="M434.1,320.8L445.5,323.3" stroke="#6e6e6e" stroke-width="1.6" stroke-opacity="0.71"/><path d="M446.6,323.5L451.1,324.5" stroke="#6e6e6e" stroke-width="1.6" stroke-opacity="0.40"/><path d="M452.6,324.8L457.2,325.8" stroke="#6e6e6e" stroke-width="1.6" stroke-opacity="0.55"/><path d="M458.3,326.0L463.8,327.2" stroke="#6e6e6e" stroke-width="1.6" stroke-opacity="0.64"/><path d="M464.9,327.5L470.5,328.7" stroke="#6e6e6e" stroke-width="1.6" stroke-opacity="0.70"/><path d="M411.2,323.2L471.0,335.2" stroke="#6e6e6e" stroke-width="1.36" stroke-opacity="0.34"/><path d="M411.2,323.2L418.5,324.7" stroke="#6e6e6e" stroke-width="1.6" stroke-opacity="0.66"/><path d="M425.5,326.1L435.3,328.0" stroke="#6e6e6e" stroke-width="1.6" stroke-opacity="0.43"/><path d="M450.2,331.0L459.7,332.9" stroke="#6e6e6e" stroke-width="1.6" stroke-opacity="0.52"/><path d="M461.1,333.2L471.0,335.2" stroke="#6e6e6e" stroke-width="1.6" stroke-opacity="0.75"/><path d="M417.4,329.6L471.0,341.6" stroke="#6e6e6e" stroke-width="1.36" stroke-opacity="0.34"/><path d="M417.4,329.6L428.9,332.2" stroke="#6e6e6e" stroke-width="1.6" stroke-opacity="0.69"/><path d="M435.5,333.7L449.2,336.7" stroke="#6e6e6e" stroke-width="1.6" stroke-opacity="0.43"/><path d="M459.1,338.9L464.6,340.2" stroke="#6e6e6e" stroke-width="1.6" stroke-opacity="0.63"/><path d="M465.6,340.4L471.0,341.6" stroke="#6e6e6e" stroke-width="1.6" stroke-opacity="0.40"/><path d="M411.0,336.0L471.0,348.0" stroke="#6e6e6e" stroke-width="1.36" stroke-opacity="0.34"/><path d="M411.0,336.0L424.2,338.6" stroke="#6e6e6e" stroke-width="1.6" stroke-opacity="0.64"/><path d="M425.5,338.9L432.4,340.3" stroke="#6e6e6e" stroke-width="1.6" stroke-opacity="0.59"/><path d="M433.5,340.5L441.4,342.1" stroke="#6e6e6e" stroke-width="1.6" stroke-opacity="0.58"/><path d="M455.7,344.9L465.4,346.9" stroke="#6e6e6e" stroke-width="1.6" stroke-opacity="0.67"/><path d="M466.1,347.0L471.0,348.0" stroke="#6e6e6e" stroke-width="1.6" stroke-opacity="0.57"/><path d="M416.0,342.4L471.0,354.4" stroke="#6e6e6e" stroke-width="1.36" stroke-opacity="0.34"/><path d="M441.0,347.9L454.7,350.8" stroke="#6e6e6e" stroke-width="1.6" stroke-opacity="0.53"/><path d="M455.6,351.0L462.9,352.6" stroke="#6e6e6e" stroke-width="1.6" stroke-opacity="0.53"/><path d="M463.8,352.8L471.0,354.4" stroke="#6e6e6e" stroke-width="1.6" stroke-opacity="0.47"/><path d="M402.9,348.8L471.0,360.8" stroke="#6e6e6e" stroke-width="1.36" stroke-opacity="0.34"/><path d="M402.9,348.8L409.7,350.0" stroke="#6e6e6e" stroke-width="1.6" stroke-opacity="0.45"/><path d="M410.8,350.2L423.6,352.4" stroke="#6e6e6e" stroke-width="1.6" stroke-opacity="0.64"/><path d="M424.8,352.7L430.1,353.6" stroke="#6e6e6e" stroke-width="1.6" stroke-opacity="0.44"/><path d="M431.0,353.8L438.5,355.1" stroke="#6e6e6e" stroke-width="1.6" stroke-opacity="0.45"/><path d="M439.8,355.3L444.7,356.2" stroke="#6e6e6e" stroke-width="1.6" stroke-opacity="0.73"/><path d="M446.0,356.4L455.8,358.1" stroke="#6e6e6e" stroke-width="1.6" stroke-opacity="0.51"/><path d="M456.4,358.2L469.9,360.6" stroke="#6e6e6e" stroke-width="1.6" stroke-opacity="0.53"/><path d="M470.5,360.7L471.0,360.8" stroke="#6e6e6e" stroke-width="1.6" stroke-opacity="0.50"/><path d="M513.5,302.0L545.8,310.0" stroke="#707070" stroke-width="1.275" stroke-opacity="0.32"/><path d="M513.5,302.0L522.3,304.2" stroke="#707070" stroke-width="1.5" stroke-opacity="0.44"/><path d="M523.3,304.4L529.6,306.0" stroke="#707070" stroke-width="1.5" stroke-opacity="0.66"/><path d="M539.6,308.5L545.8,310.0" stroke="#707070" stroke-width="1.5" stroke-opacity="0.51"/><path d="M489.6,308.2L528.9,316.2" stroke="#707070" stroke-width="1.275" stroke-opacity="0.32"/><path d="M489.6,308.2L499.8,310.3" stroke="#707070" stroke-width="1.5" stroke-opacity="0.38"/><path d="M500.6,310.4L506.7,311.7" stroke="#707070" stroke-width="1.5" stroke-opacity="0.41"/><path d="M507.4,311.8L517.0,313.8" stroke="#707070" stroke-width="1.5" stroke-opacity="0.69"/><path d="M518.0,314.0L523.9,315.2" stroke="#707070" stroke-width="1.5" stroke-opacity="0.38"/><path d="M524.9,315.4L528.9,316.2" stroke="#707070" stroke-width="1.5" stroke-opacity="0.43"/><path d="M508.3,314.4L543.3,322.4" stroke="#707070" stroke-width="1.275" stroke-opacity="0.32"/><path d="M516.6,316.3L520.7,317.3" stroke="#707070" stroke-width="1.5" stroke-opacity="0.49"/><path d="M521.8,317.5L527.7,318.8" stroke="#707070" stroke-width="1.5" stroke-opacity="0.41"/><path d="M528.6,319.1L536.0,320.7" stroke="#707070" stroke-width="1.5" stroke-opacity="0.36"/><path d="M507.9,320.6L555.2,328.6" stroke="#707070" stroke-width="1.275" stroke-opacity="0.32"/><path d="M514.3,321.7L520.1,322.7" stroke="#707070" stroke-width="1.5" stroke-opacity="0.55"/><path d="M521.3,322.9L528.6,324.1" stroke="#707070" stroke-width="1.5" stroke-opacity="0.38"/><path d="M537.7,325.6L541.4,326.3" stroke="#707070" stroke-width="1.5" stroke-opacity="0.40"/><path d="M542.0,326.4L550.4,327.8" stroke="#707070" stroke-width="1.5" stroke-opacity="0.51"/><path d="M551.3,327.9L555.2,328.6" stroke="#707070" stroke-width="1.5" stroke-opacity="0.43"/><path d="M488.9,326.8L542.5,334.8" stroke="#707070" stroke-width="1.275" stroke-opacity="0.32"/><path d="M503.7,329.0L511.2,330.1" stroke="#707070" stroke-width="1.5" stroke-opacity="0.38"/><path d="M512.5,330.3L518.2,331.2" stroke="#707070" stroke-width="1.5" stroke-opacity="0.45"/><path d="M519.1,331.3L528.7,332.7" stroke="#707070" stroke-width="1.5" stroke-opacity="0.61"/><path d="M529.5,332.9L532.7,333.3" stroke="#707070" stroke-width="1.5" stroke-opacity="0.61"/><path d="M539.5,334.4L542.5,334.8" stroke="#707070" stroke-width="1.5" stroke-opacity="0.60"/><path d="M512.2,333.0L547.0,341.0" stroke="#707070" stroke-width="1.275" stroke-opacity="0.32"/><path d="M512.2,333.0L521.7,335.2" stroke="#707070" stroke-width="1.5" stroke-opacity="0.49"/><path d="M522.8,335.4L531.3,337.4" stroke="#707070" stroke-width="1.5" stroke-opacity="0.47"/><path d="M532.8,337.7L541.6,339.8" stroke="#707070" stroke-width="1.5" stroke-opacity="0.68"/><path d="M543.1,340.1L547.0,341.0" stroke="#707070" stroke-width="1.5" stroke-opacity="0.62"/><path d="M497.1,339.2L549.0,347.2" stroke="#707070" stroke-width="1.275" stroke-opacity="0.32"/><path d="M497.1,339.2L507.4,340.8" stroke="#707070" stroke-width="1.5" stroke-opacity="0.50"/><path d="M508.3,340.9L513.0,341.7" stroke="#707070" stroke-width="1.5" stroke-opacity="0.66"/><path d="M524.1,343.4L527.8,343.9" stroke="#707070" stroke-width="1.5" stroke-opacity="0.66"/><path d="M529.4,344.2L534.8,345.0" stroke="#707070" stroke-width="1.5" stroke-opacity="0.68"/><path d="M540.7,345.9L549.0,347.2" stroke="#707070" stroke-width="1.5" stroke-opacity="0.40"/><path d="M501.6,345.4L534.0,353.4" stroke="#707070" stroke-width="1.275" stroke-opacity="0.32"/><path d="M509.6,347.4L515.2,348.8" stroke="#707070" stroke-width="1.5" stroke-opacity="0.63"/><path d="M516.5,349.1L522.6,350.6" stroke="#707070" stroke-width="1.5" stroke-opacity="0.67"/><path d="M523.6,350.8L530.8,352.6" stroke="#707070" stroke-width="1.5" stroke-opacity="0.50"/><path d="M531.5,352.8L534.0,353.4" stroke="#707070" stroke-width="1.5" stroke-opacity="0.45"/><path d="M515.3,351.6L573.8,359.6" stroke="#707070" stroke-width="1.275" stroke-opacity="0.32"/><path d="M515.3,351.6L525.4,353.0" stroke="#707070" stroke-width="1.5" stroke-opacity="0.37"/><path d="M526.0,353.1L532.8,354.0" stroke="#707070" stroke-width="1.5" stroke-opacity="0.46"/><path d="M534.0,354.2L541.7,355.2" stroke="#707070" stroke-width="1.5" stroke-opacity="0.67"/><path d="M553.9,356.9L563.6,358.2" stroke="#707070" stroke-width="1.5" stroke-opacity="0.69"/><path d="M564.2,358.3L573.6,359.6" stroke="#707070" stroke-width="1.5" stroke-opacity="0.52"/><path d="M508.7,357.8L563.0,365.8" stroke="#707070" stroke-width="1.275" stroke-opacity="0.32"/><path d="M513.1,358.4L523.6,360.0" stroke="#707070" stroke-width="1.5" stroke-opacity="0.56"/><path d="M531.5,361.2L536.5,361.9" stroke="#707070" stroke-width="1.5" stroke-opacity="0.52"/><path d="M537.4,362.0L545.6,363.2" stroke="#707070" stroke-width="1.5" stroke-opacity="0.62"/><path d="M552.2,364.2L558.9,365.2" stroke="#707070" stroke-width="1.5" stroke-opacity="0.58"/><path d="M559.7,365.3L563.0,365.8" stroke="#707070" stroke-width="1.5" stroke-opacity="0.52"/><path d="M512.3,364.0L547.8,372.0" stroke="#707070" stroke-width="1.275" stroke-opacity="0.32"/><path d="M512.3,364.0L517.0,365.1" stroke="#707070" stroke-width="1.5" stroke-opacity="0.58"/><path d="M518.3,365.3L526.4,367.2" stroke="#707070" stroke-width="1.5" stroke-opacity="0.51"/><path d="M527.0,367.3L535.8,369.3" stroke="#707070" stroke-width="1.5" stroke-opacity="0.62"/><path d="M536.7,369.5L547.2,371.9" stroke="#707070" stroke-width="1.5" stroke-opacity="0.58"/><path d="M460.7,350.0L493.5,355.0" stroke="#626262" stroke-width="1.275" stroke-opacity="0.29"/><path d="M460.7,350.0L464.7,350.6" stroke="#626262" stroke-width="1.5" stroke-opacity="0.40"/><path d="M465.7,350.8L474.7,352.1" stroke="#626262" stroke-width="1.5" stroke-opacity="0.56"/><path d="M475.9,352.3L484.6,353.6" stroke="#626262" stroke-width="1.5" stroke-opacity="0.38"/><path d="M485.2,353.7L492.0,354.8" stroke="#626262" stroke-width="1.5" stroke-opacity="0.63"/><path d="M435.3,355.5L464.4,360.5" stroke="#626262" stroke-width="1.275" stroke-opacity="0.29"/><path d="M435.3,355.5L445.0,357.2" stroke="#626262" stroke-width="1.5" stroke-opacity="0.35"/><path d="M451.3,361.0L494.0,366.0" stroke="#626262" stroke-width="1.275" stroke-opacity="0.29"/><path d="M451.3,361.0L460.0,362.0" stroke="#626262" stroke-width="1.5" stroke-opacity="0.50"/><path d="M460.9,362.1L464.8,362.6" stroke="#626262" stroke-width="1.5" stroke-opacity="0.34"/><path d="M465.5,362.7L469.9,363.2" stroke="#626262" stroke-width="1.5" stroke-opacity="0.63"/><path d="M476.3,363.9L483.5,364.8" stroke="#626262" stroke-width="1.5" stroke-opacity="0.40"/><path d="M433.3,366.5L464.5,371.5" stroke="#626262" stroke-width="1.275" stroke-opacity="0.29"/><path d="M433.3,366.5L442.1,367.9" stroke="#626262" stroke-width="1.5" stroke-opacity="0.49"/><path d="M442.9,368.0L448.4,368.9" stroke="#626262" stroke-width="1.5" stroke-opacity="0.55"/><path d="M449.8,369.1L460.2,370.8" stroke="#626262" stroke-width="1.5" stroke-opacity="0.45"/><path d="M460.3,372.0L485.8,377.0" stroke="#626262" stroke-width="1.275" stroke-opacity="0.29"/><path d="M460.3,372.0L469.1,373.7" stroke="#626262" stroke-width="1.5" stroke-opacity="0.63"/><path d="M469.9,373.9L474.1,374.7" stroke="#626262" stroke-width="1.5" stroke-opacity="0.58"/><path d="M474.7,374.8L479.4,375.7" stroke="#626262" stroke-width="1.5" stroke-opacity="0.49"/><path d="M440.1,377.5L466.0,382.5" stroke="#626262" stroke-width="1.275" stroke-opacity="0.29"/><path d="M440.1,377.5L445.1,378.5" stroke="#626262" stroke-width="1.5" stroke-opacity="0.53"/><path d="M446.1,378.7L453.8,380.2" stroke="#626262" stroke-width="1.5" stroke-opacity="0.53"/><path d="M455.3,380.4L462.7,381.9" stroke="#626262" stroke-width="1.5" stroke-opacity="0.47"/><path d="M463.7,382.1L466.0,382.5" stroke="#626262" stroke-width="1.5" stroke-opacity="0.57"/><path d="M574.8,369.4L576.3,369.5" stroke="#8a8a8a" stroke-width="1.5" stroke-opacity="0.50"/><path d="M589.3,316.0L590.8,316.1" stroke="#8a8a8a" stroke-width="1.5" stroke-opacity="0.59"/><path d="M506.9,342.5L508.3,342.7" stroke="#8a8a8a" stroke-width="1.5" stroke-opacity="0.68"/><path d="M512.2,298.7L515.3,299.0" stroke="#8a8a8a" stroke-width="1.5" stroke-opacity="0.44"/><path d="M542.5,334.8L546.3,335.1" stroke="#8a8a8a" stroke-width="1.5" stroke-opacity="0.51"/><path d="M522.7,290.1L525.2,290.4" stroke="#8a8a8a" stroke-width="1.5" stroke-opacity="0.41"/><path d="M544.2,346.9L546.5,347.1" stroke="#8a8a8a" stroke-width="1.5" stroke-opacity="0.34"/><path d="M535.7,333.4L538.6,333.7" stroke="#8a8a8a" stroke-width="1.5" stroke-opacity="0.69"/><path d="M511.8,329.8L513.1,330.0" stroke="#8a8a8a" stroke-width="1.5" stroke-opacity="0.62"/><path d="M506.8,364.6L510.2,365.0" stroke="#8a8a8a" stroke-width="1.5" stroke-opacity="0.40"/><path d="M580.3,335.4L582.6,335.6" stroke="#8a8a8a" stroke-width="1.5" stroke-opacity="0.52"/><path d="M585.0,334.1L587.5,334.3" stroke="#8a8a8a" stroke-width="1.5" stroke-opacity="0.42"/><path d="M573.5,335.3L575.6,335.5" stroke="#8a8a8a" stroke-width="1.5" stroke-opacity="0.38"/><path d="M504.7,365.1L508.1,365.4" stroke="#8a8a8a" stroke-width="1.5" stroke-opacity="0.69"/><path d="M581.9,351.7L585.3,352.0" stroke="#8a8a8a" stroke-width="1.5" stroke-opacity="0.58"/><path d="M570.1,362.1L571.6,362.3" stroke="#8a8a8a" stroke-width="1.5" stroke-opacity="0.63"/><path d="M514.4,312.0L518.1,312.3" stroke="#8a8a8a" stroke-width="1.5" stroke-opacity="0.31"/><path d="M537.3,320.9L540.7,321.2" stroke="#8a8a8a" stroke-width="1.5" stroke-opacity="0.54"/><path d="M581.2,373.9L584.1,374.2" stroke="#8a8a8a" stroke-width="1.5" stroke-opacity="0.33"/><path d="M554.4,299.8L558.3,300.2" stroke="#8a8a8a" stroke-width="1.5" stroke-opacity="0.65"/><path d="M515.2,306.7L518.3,307.0" stroke="#8a8a8a" stroke-width="1.5" stroke-opacity="0.60"/><path d="M589.4,346.1L590.7,346.2" stroke="#8a8a8a" stroke-width="1.5" stroke-opacity="0.59"/><path d="M487.4,368.1L490.7,368.4" stroke="#8a8a8a" stroke-width="1.5" stroke-opacity="0.61"/><path d="M577.1,341.2L580.9,341.6" stroke="#8a8a8a" stroke-width="1.5" stroke-opacity="0.56"/><path d="M535.1,324.6L537.2,324.8" stroke="#8a8a8a" stroke-width="1.5" stroke-opacity="0.31"/><path d="M498.7,361.6L500.4,361.8" stroke="#8a8a8a" stroke-width="1.5" stroke-opacity="0.56"/><path d="M566.3,352.5L568.8,352.8" stroke="#8a8a8a" stroke-width="1.5" stroke-opacity="0.43"/><path d="M511.0,306.9L514.0,307.2" stroke="#8a8a8a" stroke-width="1.5" stroke-opacity="0.57"/><path d="M584.6,319.8L588.4,320.1" stroke="#8a8a8a" stroke-width="1.5" stroke-opacity="0.66"/><path d="M513.0,375.7L515.8,376.0" stroke="#8a8a8a" stroke-width="1.5" stroke-opacity="0.69"/><path d="M566.2,320.0L568.0,320.2" stroke="#8a8a8a" stroke-width="1.5" stroke-opacity="0.51"/><path d="M534.7,293.2L538.3,293.5" stroke="#8a8a8a" stroke-width="1.5" stroke-opacity="0.51"/><path d="M533.0,357.0L534.8,357.2" stroke="#8a8a8a" stroke-width="1.5" stroke-opacity="0.38"/><path d="M544.9,311.7L546.9,311.9" stroke="#8a8a8a" stroke-width="1.5" stroke-opacity="0.33"/><path d="M486.7,322.0L489.3,322.2" stroke="#8a8a8a" stroke-width="1.5" stroke-opacity="0.68"/><path d="M551.4,327.3L553.6,327.5" stroke="#8a8a8a" stroke-width="1.5" stroke-opacity="0.39"/><path d="M533.1,376.3L534.5,376.5" stroke="#8a8a8a" stroke-width="1.5" stroke-opacity="0.47"/><path d="M556.4,358.6L559.1,358.9" stroke="#8a8a8a" stroke-width="1.5" stroke-opacity="0.56"/><path d="M584.2,371.2L586.0,371.4" stroke="#8a8a8a" stroke-width="1.5" stroke-opacity="0.52"/><path d="M590.7,337.5L592.3,337.7" stroke="#8a8a8a" stroke-width="1.5" stroke-opacity="0.61"/><path d="M401.0,308.0L407.0,309.0" stroke="#f0f0f0" stroke-width="2.2" stroke-opacity="1.00"/><path d="M406.0,318.0L411.0,319.0" stroke="#f0f0f0" stroke-width="2.2" stroke-opacity="1.00"/><path d="M413.0,327.0L420.0,328.0" stroke="#f0f0f0" stroke-width="2.2" stroke-opacity="1.00"/><path d="M437.0,338.0L443.0,339.0" stroke="#f0f0f0" stroke-width="2.2" stroke-opacity="1.00"/><path d="M495.0,347.0L502.0,348.0" stroke="#f0f0f0" stroke-width="2.2" stroke-opacity="1.00"/><path d="M471.0,298.0L476.0,299.0" stroke="#f0f0f0" stroke-width="2.2" stroke-opacity="1.00"/><path d="M501.0,290.0L505.0,291.0" stroke="#f0f0f0" stroke-width="2.2" stroke-opacity="1.00"/><path d="M466.0,350.0L485.0,353.0" stroke="#f2f2f2" stroke-width="1.87" stroke-opacity="0.45"/><path d="M466.0,350.0L474.2,351.3" stroke="#f2f2f2" stroke-width="2.2" stroke-opacity="0.86"/><path d="M475.1,351.4L485.0,353.0" stroke="#f2f2f2" stroke-width="2.2" stroke-opacity="0.92"/><path d="M466.0,353.8L485.0,356.8" stroke="#f2f2f2" stroke-width="1.87" stroke-opacity="0.45"/><path d="M466.0,353.8L482.4,356.4" stroke="#f2f2f2" stroke-width="2.2" stroke-opacity="0.89"/><path d="M483.4,356.6L485.0,356.8" stroke="#f2f2f2" stroke-width="2.2" stroke-opacity="0.76"/><path d="M466.0,357.6L485.0,360.6" stroke="#f2f2f2" stroke-width="1.87" stroke-opacity="0.45"/><path d="M466.0,357.6L474.2,358.9" stroke="#f2f2f2" stroke-width="2.2" stroke-opacity="0.93"/><path d="M475.5,359.1L485.0,360.6" stroke="#f2f2f2" stroke-width="2.2" stroke-opacity="0.89"/><path d="M466.0,361.4L485.0,364.4" stroke="#f2f2f2" stroke-width="1.87" stroke-opacity="0.45"/><path d="M466.0,361.4L483.8,364.2" stroke="#f2f2f2" stroke-width="2.2" stroke-opacity="0.84"/><path d="M466.0,365.2L485.0,368.2" stroke="#f2f2f2" stroke-width="1.87" stroke-opacity="0.45"/><path d="M466.0,365.2L482.0,367.7" stroke="#f2f2f2" stroke-width="2.2" stroke-opacity="0.82"/><path d="M482.7,367.8L485.0,368.2" stroke="#f2f2f2" stroke-width="2.2" stroke-opacity="1.00"/><path d="M478.0,367.0 L485.0,365.0 L488.0,370.0 L490.0,379.0 L485.0,377.0 L480.0,380.0 L477.0,373.0Z" fill="#c83444" fill-opacity="0.95"/><path d="M580.0,359.0L584.0,358.5" stroke="#f0f0f0" stroke-width="2.2" stroke-opacity="0.95"/><path d="M578.0,362.0L585.0,361.5" stroke="#f0f0f0" stroke-width="2.2" stroke-opacity="0.95"/><path d="M579.0,365.0L585.0,364.5" stroke="#f0f0f0" stroke-width="2.2" stroke-opacity="0.95"/><path d="M581.0,368.0L586.0,367.5" stroke="#f0f0f0" stroke-width="2.2" stroke-opacity="0.95"/><path d="M580.0,371.0L586.0,370.5" stroke="#f0f0f0" stroke-width="2.2" stroke-opacity="0.95"/><path d="M582.0,374.0L585.0,373.5" stroke="#f0f0f0" stroke-width="2.2" stroke-opacity="0.95"/><path d="M481.0,386.0 Q536.0,388.0 573.0,372.0" fill="none" stroke="#6a6a6a" stroke-width="1.8" stroke-opacity="0.7" stroke-dasharray="2 1.5 4 2"/><path d="M273.0,272.0L278.0,273.0" stroke="#c83848" stroke-width="2.4" stroke-opacity="0.95"/><path d="M286.0,271.0L295.0,272.0" stroke="#c83848" stroke-width="2.4" stroke-opacity="0.95"/><path d="M295.0,281.0L303.0,282.0" stroke="#c83848" stroke-width="2.4" stroke-opacity="0.95"/><path d="M301.0,277.0L305.0,278.0" stroke="#c83848" stroke-width="2.4" stroke-opacity="0.95"/><path d="M444.0,265.0L447.0,266.0" stroke="#c83848" stroke-width="2.4" stroke-opacity="0.95"/><path d="M421.0,342.0L429.0,343.0" stroke="#c83848" stroke-width="2.4" stroke-opacity="0.95"/><path d="M446.0,335.0L453.0,336.0" stroke="#c83848" stroke-width="2.4" stroke-opacity="0.95"/><path d="M461.0,338.0L471.0,339.0" stroke="#c83848" stroke-width="2.4" stroke-opacity="0.95"/><path d="M506.0,275.0L510.0,276.0" stroke="#c83848" stroke-width="2.4" stroke-opacity="0.95"/></g></svg><!--/CLOUD-->
 <div class="abs" style="left:8px;top:8px;width:19px;height:19px;border-radius:50%;background:#fff"></div>
 <div class="abs" style="left:0;top:90px;width:783px;height:30px;background:#fffa62;box-shadow:inset 0 1px 0 #d9d25a,inset 0 -1px 0 #aca646"></div>
 <svg class="abs" style="left:0;top:90px;filter:blur(0.25px)" width="120" height="30" viewBox="0 0 120 30" fill="none" stroke="#55522f" stroke-width="2">
  <path d="M15 11.2H21.2C23.2 11.2 24 12.8 24 14.8C24 17 23.2 18.5 21.2 18.5H15Z"/>
  <path d="M22.8 12.2C23.6 9 22.8 6.3 20.2 5"/>
  <path d="M29.1 4.4V19.2"/><path d="M34 8.4V19.2"/>
  <path d="M46.5 10.8C45.5 9.4 44.2 8.7 42.6 8.7C39.8 8.7 38.2 11.1 38.2 13.8C38.2 16.6 39.8 18.9 42.6 18.9C44.2 18.9 45.5 18.2 46.5 16.8"/>
  <path d="M51 19.2L58.3 8M53.9 13.8L58.9 19.2"/>
  <path d="M64.6 19.2V9C64.6 6 66 4.6 68.6 4.6M62.4 9.2H67.8"/>
  <path d="M71 13.6H79.2C79.2 10.5 77.6 8.7 75.1 8.7C72.4 8.7 70.9 11.1 70.9 13.8C70.9 16.7 72.5 18.9 75.2 18.9C76.7 18.9 77.9 18.3 78.9 17.2"/>
  <path d="M84.2 4.4V19.2"/>
  <path d="M88.8 12.3V15C88.8 17.6 90.6 19.1 93.2 19.1H97.8V4.5M93 8.6L97.8 7.8"/>
 </svg>
 <div class="abs" style="left:14px;top:113px;font-size:6px;color:#e2d85a;letter-spacing:0.6px;white-space:nowrap">LIDAR / scan your world</div>
 <div class="abs" id="ts" style="left:372.5px;top:89.6px;-webkit-text-stroke:0.35px #55522f;height:30px;line-height:30px;font-family:'Liberation Mono',monospace;font-size:28.8px;color:#55522f;white-space:nowrap">2025-07-04 CEST 20:18:25</div>
 <div class="abs" style="left:0;top:503px;width:783px;height:30px;background:#fffa62;box-shadow:inset 0 1px 0 #d9d25a,inset 0 -1px 0 #aca646"></div>
 <div class="abs" id="qb" style="left:12.1px;top:503.6px;-webkit-text-stroke:0.3px #55522f;height:30px;line-height:30px;font-family:'Liberation Mono',monospace;font-size:24.2px;color:#55522f;white-space:nowrap;transform-origin:0 50%;transform:scaleX(1.1)">qb2-CW27MBIAU</div>
 <div class="abs" style="left:6px;top:603px;font-size:13.5px;font-weight:bold;color:#fff;letter-spacing:0.3px;white-space:nowrap">QbProtect</div>
</div>

</body></html>
